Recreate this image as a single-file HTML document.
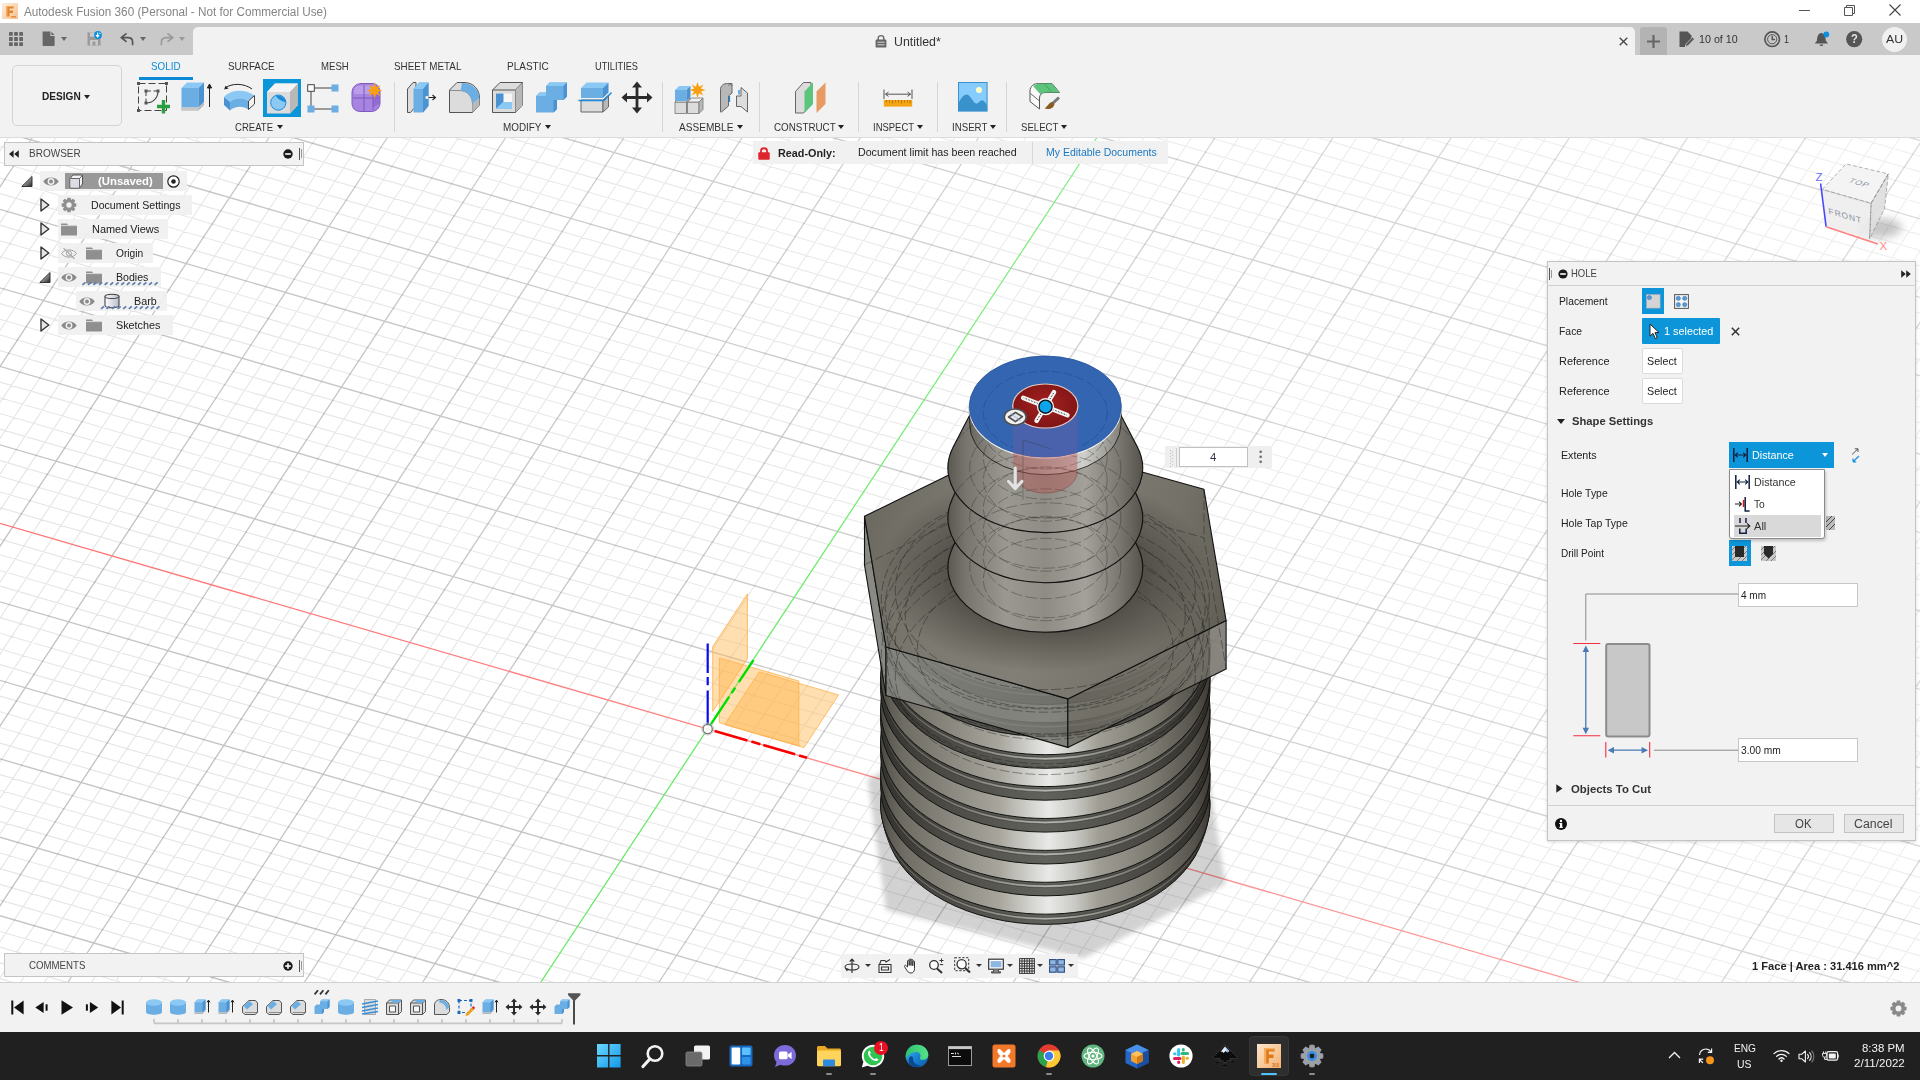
<!DOCTYPE html>
<html lang="en"><head><meta charset="utf-8"><title>Autodesk Fusion 360</title><style>
html,body{margin:0;padding:0}
body{width:1920px;height:1080px;overflow:hidden;background:#fff;position:relative;font-family:"Liberation Sans",sans-serif}
.b{position:absolute;display:block}
.t{position:absolute;display:block;white-space:nowrap;transform-origin:0 50%}
svg{overflow:visible}
</style></head>
<body>
<svg class="b" style="left:0;top:0" width="1920" height="1080" viewBox="0 0 1920 1080">
<path d="M-2.0 153.8L9.7 136.0M-2.0 225.7L57.0 136.0M-2.0 261.7L80.7 136.0M-2.0 297.6L104.4 136.0M-2.0 333.6L128.1 136.0M-2.0 405.5L175.4 136.0M-2.0 441.5L199.1 136.0M-2.0 477.4L222.7 136.0M-2.0 513.4L246.4 136.0M-2.0 585.3L293.7 136.0M-2.0 621.2L317.4 136.0M-2.0 657.2L341.1 136.0M-2.0 693.1L364.7 136.0M-2.0 765.0L412.1 136.0M-2.0 801.0L435.7 136.0M-2.0 836.9L459.4 136.0M-2.0 872.9L483.0 136.0M-2.0 944.7L530.3 136.0M-2.0 980.7L554.0 136.0M18.8 985.0L577.7 136.0M42.5 985.0L601.3 136.0M89.8 985.0L648.6 136.0M113.4 985.0L672.3 136.0M137.1 985.0L695.9 136.0M160.7 985.0L719.6 136.0M208.0 985.0L766.9 136.0M231.6 985.0L790.5 136.0M255.3 985.0L814.2 136.0M278.9 985.0L837.8 136.0M326.2 985.0L885.1 136.0M349.9 985.0L908.8 136.0M373.5 985.0L932.4 136.0M397.1 985.0L956.1 136.0M444.4 985.0L1003.3 136.0M468.1 985.0L1027.0 136.0M491.7 985.0L1050.6 136.0M515.3 985.0L1074.3 136.0M562.6 985.0L1121.5 136.0M586.2 985.0L1145.2 136.0M609.9 985.0L1168.8 136.0M633.5 985.0L1192.4 136.0M680.8 985.0L1239.7 136.0M704.4 985.0L1263.3 136.0M728.0 985.0L1287.0 136.0M751.6 985.0L1310.6 136.0M798.9 985.0L1357.9 136.0M822.5 985.0L1381.5 136.0M846.2 985.0L1405.1 136.0M869.8 985.0L1428.8 136.0M917.0 985.0L1476.0 136.0M940.6 985.0L1499.6 136.0M964.3 985.0L1523.3 136.0M987.9 985.0L1546.9 136.0M1035.1 985.0L1594.1 136.0M1058.7 985.0L1617.7 136.0M1082.4 985.0L1641.4 136.0M1106.0 985.0L1665.0 136.0M1153.2 985.0L1712.2 136.0M1176.8 985.0L1735.8 136.0M1200.4 985.0L1759.4 136.0M1224.0 985.0L1783.1 136.0M1271.3 985.0L1830.3 136.0M1294.9 985.0L1853.9 136.0M1318.5 985.0L1877.5 136.0M1342.1 985.0L1901.1 136.0M1389.3 985.0L1922.0 176.0M1412.9 985.0L1922.0 211.9M1436.5 985.0L1922.0 247.7M1460.1 985.0L1922.0 283.6M1507.3 985.0L1922.0 355.3M1530.9 985.0L1922.0 391.1M1554.5 985.0L1922.0 426.9M1578.1 985.0L1922.0 462.8M1625.3 985.0L1922.0 534.5M1648.9 985.0L1922.0 570.3M1672.5 985.0L1922.0 606.1M1696.1 985.0L1922.0 642.0M1743.3 985.0L1922.0 713.6M1766.9 985.0L1922.0 749.5M1790.5 985.0L1922.0 785.3M1814.1 985.0L1922.0 821.1M1861.3 985.0L1922.0 892.8M1884.8 985.0L1922.0 928.6M1908.4 985.0L1922.0 964.4M-2.0 978.0L22.3 985.0M-2.0 962.3L76.3 985.0M-2.0 946.6L130.4 985.0M-2.0 930.9L184.5 985.0M-2.0 899.5L292.6 985.0M-2.0 883.8L346.6 985.0M-2.0 868.1L400.6 985.0M-2.0 852.4L454.7 985.0M-2.0 821.0L562.7 985.0M-2.0 805.4L616.8 985.0M-2.0 789.7L670.8 985.0M-2.0 774.0L724.8 985.0M-2.0 742.6L832.8 985.0M-2.0 726.9L886.8 985.0M-2.0 711.2L940.8 985.0M-2.0 695.5L994.8 985.0M-2.0 664.1L1102.8 985.0M-2.0 648.4L1156.8 985.0M-2.0 632.7L1210.7 985.0M-2.0 617.0L1264.7 985.0M-2.0 585.6L1372.7 985.0M-2.0 569.9L1426.6 985.0M-2.0 554.2L1480.6 985.0M-2.0 538.5L1534.5 985.0M-2.0 507.1L1642.4 985.0M-2.0 491.4L1696.4 985.0M-2.0 475.7L1750.3 985.0M-2.0 460.0L1804.2 985.0M-2.0 428.6L1912.1 985.0M-2.0 412.9L1922.0 972.2M-2.0 397.2L1922.0 956.5M-2.0 381.5L1922.0 940.9M-2.0 350.1L1922.0 909.5M-2.0 334.4L1922.0 893.8M-2.0 318.7L1922.0 878.2M-2.0 303.0L1922.0 862.5M-2.0 271.6L1922.0 831.1M-2.0 255.9L1922.0 815.5M-2.0 240.2L1922.0 799.8M-2.0 224.5L1922.0 784.1M-2.0 193.1L1922.0 752.8M-2.0 177.4L1922.0 737.1M-2.0 161.7L1922.0 721.4M-2.0 146.0L1922.0 705.7M71.7 136.0L1922.0 674.4M125.7 136.0L1922.0 658.7M179.6 136.0L1922.0 643.0M233.6 136.0L1922.0 627.3M341.5 136.0L1922.0 596.0M395.5 136.0L1922.0 580.3M449.4 136.0L1922.0 564.6M503.4 136.0L1922.0 548.9M611.3 136.0L1922.0 517.6M665.2 136.0L1922.0 501.9M719.1 136.0L1922.0 486.2M773.1 136.0L1922.0 470.5M880.9 136.0L1922.0 439.1M934.8 136.0L1922.0 423.5M988.7 136.0L1922.0 407.8M1042.6 136.0L1922.0 392.1M1150.4 136.0L1922.0 360.7M1204.3 136.0L1922.0 345.0M1258.2 136.0L1922.0 329.3M1312.1 136.0L1922.0 313.7M1419.9 136.0L1922.0 282.3M1473.7 136.0L1922.0 266.6M1527.6 136.0L1922.0 250.9M1581.5 136.0L1922.0 235.2M1689.2 136.0L1922.0 203.8M1743.0 136.0L1922.0 188.2M1796.9 136.0L1922.0 172.5M1850.7 136.0L1922.0 156.8" stroke="#000" stroke-opacity=".105" stroke-width="1.1" fill="none"/>
<path d="M-2.0 189.7L33.4 136.0M-2.0 369.6L151.7 136.0M-2.0 549.3L270.1 136.0M-2.0 729.1L388.4 136.0M-2.0 908.8L506.7 136.0M66.1 985.0L625.0 136.0M184.3 985.0L743.2 136.0M302.6 985.0L861.5 136.0M420.8 985.0L979.7 136.0M657.1 985.0L1216.1 136.0M775.3 985.0L1334.2 136.0M893.4 985.0L1452.4 136.0M1011.5 985.0L1570.5 136.0M1129.6 985.0L1688.6 136.0M1247.6 985.0L1806.7 136.0M1365.7 985.0L1922.0 140.2M1483.7 985.0L1922.0 319.4M1601.7 985.0L1922.0 498.6M1719.7 985.0L1922.0 677.8M1837.7 985.0L1922.0 856.9M-2.0 915.2L238.5 985.0M-2.0 836.7L508.7 985.0M-2.0 758.3L778.8 985.0M-2.0 679.8L1048.8 985.0M-2.0 601.3L1318.7 985.0M-2.0 444.3L1858.1 985.0M-2.0 365.8L1922.0 925.2M-2.0 287.3L1922.0 846.8M-2.0 208.8L1922.0 768.4M17.7 136.0L1922.0 690.0M287.6 136.0L1922.0 611.6M557.3 136.0L1922.0 533.2M827.0 136.0L1922.0 454.8M1096.5 136.0L1922.0 376.4M1366.0 136.0L1922.0 298.0M1635.3 136.0L1922.0 219.5M1904.6 136.0L1922.0 141.1" stroke="#000" stroke-opacity=".235" stroke-width="1.35" fill="none"/>
<path d="M-2.0 522.8L1588.5 985.0" stroke="#ff7474" stroke-width="1.3" fill="none"/>
<path d="M539.0 985.0L1097.9 136.0" stroke="#58e858" stroke-width="1.3" fill="none"/>
<defs><linearGradient id="gFade" gradientUnits="userSpaceOnUse" x1="300" y1="900" x2="1700" y2="200"><stop offset="0" stop-color="#fff" stop-opacity="0"/><stop offset="1" stop-color="#fff" stop-opacity=".38"/></linearGradient></defs><rect x="0" y="138" width="1920" height="845" fill="url(#gFade)"/>
<defs><linearGradient id="gBarb" gradientUnits="userSpaceOnUse" x1="946" y1="0" x2="1145" y2="0"><stop offset="0" stop-color="#57554d"/><stop offset=".1" stop-color="#77756d"/><stop offset=".3" stop-color="#9a9890"/><stop offset=".5" stop-color="#8e8c84"/><stop offset=".7" stop-color="#a3a199"/><stop offset=".86" stop-color="#7c7a72"/><stop offset="1" stop-color="#514f47"/></linearGradient><linearGradient id="gThr" gradientUnits="userSpaceOnUse" x1="880" y1="0" x2="1211" y2="0"><stop offset="0" stop-color="#46443d"/><stop offset=".03" stop-color="#5e5c54"/><stop offset=".07" stop-color="#6e6c63"/><stop offset=".21" stop-color="#8a887e"/><stop offset=".36" stop-color="#a8a69c"/><stop offset=".45" stop-color="#d0d0cc"/><stop offset=".51" stop-color="#e9e9e7"/><stop offset=".59" stop-color="#c8c8c4"/><stop offset=".66" stop-color="#a09e94"/><stop offset=".82" stop-color="#7d7b72"/><stop offset=".95" stop-color="#55534b"/><stop offset="1" stop-color="#3a3831"/></linearGradient><linearGradient id="gGrv" gradientUnits="userSpaceOnUse" x1="880" y1="0" x2="1211" y2="0"><stop offset="0" stop-color="#34322c"/><stop offset=".2" stop-color="#4c4b45"/><stop offset=".5" stop-color="#62625c"/><stop offset=".8" stop-color="#4a4943"/><stop offset="1" stop-color="#2c2a25"/></linearGradient><linearGradient id="gRdg" gradientUnits="userSpaceOnUse" x1="880" y1="0" x2="1211" y2="0"><stop offset="0" stop-color="#55534b"/><stop offset=".3" stop-color="#8a8982"/><stop offset=".52" stop-color="#b5b5b0"/><stop offset=".8" stop-color="#7a7972"/><stop offset="1" stop-color="#45433c"/></linearGradient><linearGradient id="gHexTop" gradientUnits="userSpaceOnUse" x1="864" y1="520" x2="1226" y2="620"><stop offset="0" stop-color="#6b6960"/><stop offset=".25" stop-color="#7b7970"/><stop offset=".5" stop-color="#827f76"/><stop offset=".8" stop-color="#737168"/><stop offset="1" stop-color="#605e55"/></linearGradient><linearGradient id="gHexFL" gradientUnits="userSpaceOnUse" x1="886" y1="0" x2="1068" y2="0"><stop offset="0" stop-color="#8b8b86"/><stop offset="1" stop-color="#72726c"/></linearGradient><linearGradient id="gHexFR" gradientUnits="userSpaceOnUse" x1="1068" y1="0" x2="1227" y2="0"><stop offset="0" stop-color="#67655c"/><stop offset="1" stop-color="#77756c"/></linearGradient><linearGradient id="gNeck" gradientUnits="userSpaceOnUse" x1="969" y1="0" x2="1122" y2="0"><stop offset="0" stop-color="#66645c"/><stop offset=".2" stop-color="#98968e"/><stop offset=".45" stop-color="#a8a6a0"/><stop offset=".75" stop-color="#cfcfcb"/><stop offset="1" stop-color="#807e76"/></linearGradient><filter id="fSh" x="-20%" y="-20%" width="140%" height="140%"><feGaussianBlur stdDeviation="7"/></filter><filter id="fSh2" x="-50%" y="-80%" width="200%" height="260%"><feGaussianBlur stdDeviation="4"/></filter><radialGradient id="gAO" cx=".5" cy=".5" r=".5"><stop offset="0" stop-color="#1c1a14" stop-opacity=".5"/><stop offset=".6" stop-color="#1c1a14" stop-opacity=".4"/><stop offset="1" stop-color="#1c1a14" stop-opacity="0"/></radialGradient><filter id="fSh3" x="-10%" y="-10%" width="120%" height="120%"><feGaussianBlur stdDeviation="2.5"/></filter><radialGradient id="gRed" cx=".5" cy=".45" r=".6"><stop offset="0" stop-color="#a52020"/><stop offset="1" stop-color="#7c1414"/></radialGradient></defs><path d="M724.6 724.6L804.0 747.6L838.6 694.9L759.3 671.9Z" fill="#ffb040" fill-opacity=".42" stroke="#ffb04c" stroke-opacity=".8" stroke-width="1"/><path d="M712.7 711.4L747.4 658.7L747.4 593.9L712.7 646.6Z" fill="#ffb040" fill-opacity=".42" stroke="#ffb04c" stroke-opacity=".8" stroke-width="1"/><path d="M719.4 722.7L798.8 745.8L798.8 681.0L719.4 657.9Z" fill="#ffb040" fill-opacity=".42" stroke="#ffb04c" stroke-opacity=".8" stroke-width="1"/><path d="M707.7 643.5V673M707.7 677V685.3M707.7 690.4V726" stroke="#0a0af0" stroke-width="2.2" fill="none"/><path d="M710.0 725.6L729.2 696.7M731.5 693.2L735.2 687.7M738.8 682.2L753.5 660.2" stroke="#00e000" stroke-width="2.4" fill="none"/><path d="M714.7 731.0L747.4 740.5M751.4 741.6L760.3 744.2M763.3 745.1L795.1 754.3M799.1 755.4L807.0 757.7" stroke="#f80000" stroke-width="2.6" fill="none"/><circle cx="707.7" cy="729.0" r="4.6" fill="#fff" fill-opacity=".85" stroke="#777" stroke-width="1.3"/><circle cx="707.7" cy="729.0" r="6" fill="none" stroke="#bbb" stroke-width="0.8"/><path d="M867.5 779L886 910L1083 958.5L1225.5 884L1205 755L1030 700Z" fill="#000" fill-opacity=".175" filter="url(#fSh3)"/><path d="M884.1 827.0A164.7 109.4 0 1 1 1206.5 827.0L1202.6 839.5A160.7 106.7 0 0 1 888.0 839.5Z" fill="url(#gGrv)" stroke="#111" stroke-width="1"/><path d="M882.1 809.1A163.2 108.4 0 0 0 1208.5 809.1L1208.5 811.5A163.2 108.4 0 0 1 882.1 811.5Z" fill="url(#gRdg)"/><path d="M882.1 809.1A163.2 108.4 0 0 0 1208.5 809.1M882.1 811.5A163.2 108.4 0 0 0 1208.5 811.5" fill="none" stroke="#222" stroke-width=".6" stroke-opacity=".7"/><path d="M893.3 759.0A157.5 104.6 0 0 1 1197.3 759.0L1204.2 776.0A164.7 109.4 0 1 1 886.4 776.0Z" fill="url(#gThr)" stroke="#111" stroke-width="1"/><path d="M880.6 772.8A164.7 109.4 0 0 0 1210.0 772.8L1210.0 786.5A164.7 109.4 0 0 1 880.6 786.5Z" fill="url(#gGrv)"/><path d="M881.8 776.4A163.5 108.6 0 0 0 1208.8 776.4L1208.8 779.0A163.5 108.6 0 0 1 881.8 779.0Z" fill="url(#gRdg)"/><path d="M881.8 776.4A163.5 108.6 0 0 0 1208.8 776.4M881.8 779.0A163.5 108.6 0 0 0 1208.8 779.0" fill="none" stroke="#222" stroke-width=".6" stroke-opacity=".7"/><path d="M880.6 786.5A164.7 109.4 0 0 0 1210.0 786.5M880.6 772.8V786.5M1210.0 772.8V786.5" fill="none" stroke="#111" stroke-width="1"/><path d="M893.3 727.1A157.5 104.6 0 0 1 1197.3 727.1L1204.2 744.1A164.7 109.4 0 1 1 886.4 744.1Z" fill="url(#gThr)" stroke="#111" stroke-width="1"/><path d="M880.6 740.9A164.7 109.4 0 0 0 1210.0 740.9L1210.0 754.6A164.7 109.4 0 0 1 880.6 754.6Z" fill="url(#gGrv)"/><path d="M881.8 744.5A163.5 108.6 0 0 0 1208.8 744.5L1208.8 747.1A163.5 108.6 0 0 1 881.8 747.1Z" fill="url(#gRdg)"/><path d="M881.8 744.5A163.5 108.6 0 0 0 1208.8 744.5M881.8 747.1A163.5 108.6 0 0 0 1208.8 747.1" fill="none" stroke="#222" stroke-width=".6" stroke-opacity=".7"/><path d="M880.6 754.6A164.7 109.4 0 0 0 1210.0 754.6M880.6 740.9V754.6M1210.0 740.9V754.6" fill="none" stroke="#111" stroke-width="1"/><path d="M893.3 695.2A157.5 104.6 0 0 1 1197.3 695.2L1204.2 712.2A164.7 109.4 0 1 1 886.4 712.2Z" fill="url(#gThr)" stroke="#111" stroke-width="1"/><path d="M880.6 709.0A164.7 109.4 0 0 0 1210.0 709.0L1210.0 722.7A164.7 109.4 0 0 1 880.6 722.7Z" fill="url(#gGrv)"/><path d="M881.8 712.6A163.5 108.6 0 0 0 1208.8 712.6L1208.8 715.2A163.5 108.6 0 0 1 881.8 715.2Z" fill="url(#gRdg)"/><path d="M881.8 712.6A163.5 108.6 0 0 0 1208.8 712.6M881.8 715.2A163.5 108.6 0 0 0 1208.8 715.2" fill="none" stroke="#222" stroke-width=".6" stroke-opacity=".7"/><path d="M880.6 722.7A164.7 109.4 0 0 0 1210.0 722.7M880.6 709.0V722.7M1210.0 709.0V722.7" fill="none" stroke="#111" stroke-width="1"/><path d="M893.3 663.3A157.5 104.6 0 0 1 1197.3 663.3L1204.2 680.3A164.7 109.4 0 1 1 886.4 680.3Z" fill="url(#gThr)" stroke="#111" stroke-width="1"/><path d="M880.6 677.1A164.7 109.4 0 0 0 1210.0 677.1L1210.0 690.8A164.7 109.4 0 0 1 880.6 690.8Z" fill="url(#gGrv)"/><path d="M881.8 680.7A163.5 108.6 0 0 0 1208.8 680.7L1208.8 683.3A163.5 108.6 0 0 1 881.8 683.3Z" fill="url(#gRdg)"/><path d="M881.8 680.7A163.5 108.6 0 0 0 1208.8 680.7M881.8 683.3A163.5 108.6 0 0 0 1208.8 683.3" fill="none" stroke="#222" stroke-width=".6" stroke-opacity=".7"/><path d="M880.6 690.8A164.7 109.4 0 0 0 1210.0 690.8M880.6 677.1V690.8M1210.0 677.1V690.8" fill="none" stroke="#111" stroke-width="1"/><path d="M893.3 631.4A157.5 104.6 0 0 1 1197.3 631.4L1204.2 648.4A164.7 109.4 0 1 1 886.4 648.4Z" fill="url(#gThr)" stroke="#111" stroke-width="1"/><path d="M880.6 645.2A164.7 109.4 0 0 0 1210.0 645.2L1210.0 658.9A164.7 109.4 0 0 1 880.6 658.9Z" fill="url(#gGrv)"/><path d="M881.8 648.8A163.5 108.6 0 0 0 1208.8 648.8L1208.8 651.4A163.5 108.6 0 0 1 881.8 651.4Z" fill="url(#gRdg)"/><path d="M881.8 648.8A163.5 108.6 0 0 0 1208.8 648.8M881.8 651.4A163.5 108.6 0 0 0 1208.8 651.4" fill="none" stroke="#222" stroke-width=".6" stroke-opacity=".7"/><path d="M880.6 658.9A164.7 109.4 0 0 0 1210.0 658.9M880.6 645.2V658.9M1210.0 645.2V658.9" fill="none" stroke="#111" stroke-width="1"/><path d="M893.3 599.5A157.5 104.6 0 0 1 1197.3 599.5L1204.2 616.5A164.7 109.4 0 1 1 886.4 616.5Z" fill="url(#gThr)" stroke="#111" stroke-width="1"/><path d="M880.6 613.3A164.7 109.4 0 0 0 1210.0 613.3L1210.0 627.0A164.7 109.4 0 0 1 880.6 627.0Z" fill="url(#gGrv)"/><path d="M881.8 616.9A163.5 108.6 0 0 0 1208.8 616.9L1208.8 619.5A163.5 108.6 0 0 1 881.8 619.5Z" fill="url(#gRdg)"/><path d="M881.8 616.9A163.5 108.6 0 0 0 1208.8 616.9M881.8 619.5A163.5 108.6 0 0 0 1208.8 619.5" fill="none" stroke="#222" stroke-width=".6" stroke-opacity=".7"/><path d="M880.6 627.0A164.7 109.4 0 0 0 1210.0 627.0M880.6 613.3V627.0M1210.0 613.3V627.0" fill="none" stroke="#111" stroke-width="1"/><path d="M893.3 567.6A157.5 104.6 0 0 1 1197.3 567.6L1204.2 584.6A164.7 109.4 0 1 1 886.4 584.6Z" fill="url(#gThr)" stroke="#111" stroke-width="1"/><path d="M880.6 581.4A164.7 109.4 0 0 0 1210.0 581.4L1210.0 595.1A164.7 109.4 0 0 1 880.6 595.1Z" fill="url(#gGrv)"/><path d="M881.8 585.0A163.5 108.6 0 0 0 1208.8 585.0L1208.8 587.6A163.5 108.6 0 0 1 881.8 587.6Z" fill="url(#gRdg)"/><path d="M881.8 585.0A163.5 108.6 0 0 0 1208.8 585.0M881.8 587.6A163.5 108.6 0 0 0 1208.8 587.6" fill="none" stroke="#222" stroke-width=".6" stroke-opacity=".7"/><path d="M880.6 595.1A164.7 109.4 0 0 0 1210.0 595.1M880.6 581.4V595.1M1210.0 581.4V595.1" fill="none" stroke="#111" stroke-width="1"/><path d="M864.5 516.3L886.0 647.0L886.0 695.5L864.5 564.8Z" fill="#8a8a84" stroke="#111" stroke-width="1.1" stroke-linejoin="round"/><path d="M886.0 647.0L1067.8 698.9L1067.8 747.4L886.0 695.5Z" fill="url(#gHexFL)" fill-opacity=".86" stroke="#111" stroke-width="1.1" stroke-linejoin="round"/><path d="M1067.8 698.9L1226.1 620.6L1226.1 669.1L1067.8 747.4Z" fill="url(#gHexFR)" fill-opacity=".88" stroke="#111" stroke-width="1.1" stroke-linejoin="round"/><path d="M864.5 516.3L1022.8 438.7L1203.9 489.2L1226.1 620.6L1067.8 698.9L886.0 647.0Z" fill="url(#gHexTop)" stroke="#111" stroke-width="1.1" stroke-linejoin="round"/><clipPath id="cpHex"><path d="M864.5 516.3L1022.8 438.7L1203.9 489.2L1226.1 620.6L1067.8 698.9L886.0 647.0Z"/></clipPath><g clip-path="url(#cpHex)"><ellipse cx="1045" cy="572" rx="165" ry="100" fill="url(#gAO)"/></g><path d="M864.5 564.8L1022.8 487.2L1203.9 537.7L1226.1 669.1M1022.8 438.7L1022.8 487.2M1203.9 489.2L1203.9 537.7" fill="none" stroke="#222" stroke-opacity=".55" stroke-width=".8" stroke-dasharray="9 3"/><ellipse cx="1045.3" cy="600.0" rx="164.0" ry="108.9" fill="none" stroke="#1a1a1a" stroke-opacity=".5" stroke-width=".8" stroke-dasharray="10 3"/><ellipse cx="1045.3" cy="606.0" rx="160.0" ry="106.2" fill="none" stroke="#1a1a1a" stroke-opacity=".5" stroke-width=".8" stroke-dasharray="10 3"/><ellipse cx="1045.3" cy="625.0" rx="164.0" ry="108.9" fill="none" stroke="#1a1a1a" stroke-opacity=".5" stroke-width=".8" stroke-dasharray="10 3"/><ellipse cx="1045.3" cy="632.0" rx="158.0" ry="104.9" fill="none" stroke="#1a1a1a" stroke-opacity=".5" stroke-width=".8" stroke-dasharray="10 3"/><ellipse cx="1045.3" cy="655.0" rx="164.0" ry="108.9" fill="none" stroke="#1a1a1a" stroke-opacity=".5" stroke-width=".8" stroke-dasharray="10 3"/><ellipse cx="1045.3" cy="662.0" rx="158.0" ry="104.9" fill="none" stroke="#1a1a1a" stroke-opacity=".5" stroke-width=".8" stroke-dasharray="10 3"/><ellipse cx="1045.3" cy="590.0" rx="150.0" ry="99.6" fill="none" stroke="#1a1a1a" stroke-opacity=".5" stroke-width=".8" stroke-dasharray="10 3"/><ellipse cx="1045.3" cy="640.0" rx="150.0" ry="99.6" fill="none" stroke="#1a1a1a" stroke-opacity=".5" stroke-width=".8" stroke-dasharray="10 3"/><ellipse cx="1045.3" cy="615.0" rx="140.0" ry="93.0" fill="none" stroke="#1a1a1a" stroke-opacity=".5" stroke-width=".8" stroke-dasharray="10 3"/><ellipse cx="1045.3" cy="650.0" rx="128.0" ry="85.0" fill="none" stroke="#1a1a1a" stroke-opacity=".5" stroke-width=".8" stroke-dasharray="10 3"/><ellipse cx="1045.3" cy="675.0" rx="150.0" ry="99.6" fill="none" stroke="#1a1a1a" stroke-opacity=".5" stroke-width=".8" stroke-dasharray="10 3"/><path d="M973.0 503.3A75.6 50.2 0 0 1 1117.6 503.3L1138.4 548.6A97.4 64.7 0 1 1 952.2 548.6Z" fill="url(#gBarb)" stroke="#111" stroke-width="1.1"/><path d="M972.9 453.5A75.6 50.2 0 0 1 1117.7 453.5L1138.5 499.3A97.4 64.7 0 1 1 952.1 499.3Z" fill="url(#gBarb)" stroke="#111" stroke-width="1.1"/><path d="M973.8 407.3A75.6 50.2 0 0 1 1116.8 407.3L1137.4 446.9A97.4 64.7 0 1 1 953.2 446.9Z" fill="url(#gBarb)" stroke="#111" stroke-width="1.1"/><path d="M969.3 407.3A76.0 50.5 0 1 1 1121.3 407.3L1120.9 424.5A75.6 50.2 0 0 1 969.7 424.5Z" fill="url(#gNeck)" stroke="#111" stroke-width=".8"/><ellipse cx="1045.3" cy="468.0" rx="97.4" ry="64.7" fill="none" stroke="#1a1a1a" stroke-opacity=".42" stroke-width=".75" stroke-dasharray="12 3"/><ellipse cx="1045.3" cy="468.0" rx="75.6" ry="50.2" fill="none" stroke="#1a1a1a" stroke-opacity=".42" stroke-width=".75" stroke-dasharray="12 3"/><ellipse cx="1045.3" cy="458.0" rx="62.0" ry="41.2" fill="none" stroke="#1a1a1a" stroke-opacity=".42" stroke-width=".75" stroke-dasharray="12 3"/><ellipse cx="1045.3" cy="480.0" rx="62.0" ry="41.2" fill="none" stroke="#1a1a1a" stroke-opacity=".42" stroke-width=".75" stroke-dasharray="12 3"/><ellipse cx="1045.3" cy="518.0" rx="97.4" ry="64.7" fill="none" stroke="#1a1a1a" stroke-opacity=".42" stroke-width=".75" stroke-dasharray="12 3"/><ellipse cx="1045.3" cy="518.0" rx="75.6" ry="50.2" fill="none" stroke="#1a1a1a" stroke-opacity=".42" stroke-width=".75" stroke-dasharray="12 3"/><ellipse cx="1045.3" cy="508.0" rx="62.0" ry="41.2" fill="none" stroke="#1a1a1a" stroke-opacity=".42" stroke-width=".75" stroke-dasharray="12 3"/><ellipse cx="1045.3" cy="530.0" rx="62.0" ry="41.2" fill="none" stroke="#1a1a1a" stroke-opacity=".42" stroke-width=".75" stroke-dasharray="12 3"/><ellipse cx="1045.3" cy="567.5" rx="97.4" ry="64.7" fill="none" stroke="#1a1a1a" stroke-opacity=".42" stroke-width=".75" stroke-dasharray="12 3"/><ellipse cx="1045.3" cy="567.5" rx="75.6" ry="50.2" fill="none" stroke="#1a1a1a" stroke-opacity=".42" stroke-width=".75" stroke-dasharray="12 3"/><ellipse cx="1045.3" cy="557.5" rx="62.0" ry="41.2" fill="none" stroke="#1a1a1a" stroke-opacity=".42" stroke-width=".75" stroke-dasharray="12 3"/><ellipse cx="1045.3" cy="579.5" rx="62.0" ry="41.2" fill="none" stroke="#1a1a1a" stroke-opacity=".42" stroke-width=".75" stroke-dasharray="12 3"/><ellipse cx="1045.3" cy="427.7" rx="62.0" ry="41.2" fill="none" stroke="#1a1a1a" stroke-opacity=".42" stroke-width=".75" stroke-dasharray="12 3"/><ellipse cx="1045.3" cy="407.8" rx="76.6" ry="50.9" fill="#e8e8e8"/><ellipse cx="1045.3" cy="406.5" rx="76.0" ry="50.5" fill="#3465b1" stroke="#2a55a0" stroke-width=".8"/><ellipse cx="1045.3" cy="412.5" rx="62.0" ry="41.2" fill="none" stroke="#1d3f80" stroke-opacity=".55" stroke-width=".8" stroke-dasharray="9 3"/><clipPath id="cpTop"><ellipse cx="1045.3" cy="406.5" rx="76.0" ry="50.5" /></clipPath><path d="M1013.3 406.0V471.5A32.0 21.6 0 0 0 1077.3 471.5V406.0A32.0 21.6 0 0 1 1013.3 406.0Z" fill="#b85050" fill-opacity=".42"/><g clip-path="url(#cpTop)"><path d="M1013.3 406.0V471.5A32.0 21.6 0 0 0 1077.3 471.5V406.0A32.0 21.6 0 0 1 1013.3 406.0Z" fill="#4a62ac"/></g><path d="M1013.3 471.5A32.0 21.6 0 0 0 1077.3 471.5" fill="none" stroke="#7a3030" stroke-opacity=".5" stroke-width=".8"/><path d="M1023 440L1051 449M1023 440V500" fill="none" stroke="#333" stroke-opacity=".45" stroke-width=".8"/><ellipse cx="1045.3" cy="406.0" rx="33.2" ry="22.6" fill="#e8c8c0"/><ellipse cx="1045.3" cy="406.0" rx="32.0" ry="21.6" fill="url(#gRed)"/><path d="M1040.5 404.6L1023.2 397.8" stroke="#f4f4f4" stroke-width="4.6" stroke-linecap="round"/><path d="M1038.1 403.6L1023.7 397.9" stroke="#333" stroke-width="1" stroke-dasharray="1.5 1.5"/><path d="M1050.1 408.4L1067.4 415.2" stroke="#f4f4f4" stroke-width="4.6" stroke-linecap="round"/><path d="M1052.5 409.4L1066.9 415.1" stroke="#333" stroke-width="1" stroke-dasharray="1.5 1.5"/><path d="M1047.2 403.4L1054.0 392.2" stroke="#f4f4f4" stroke-width="4.6" stroke-linecap="round"/><path d="M1048.1 401.9L1053.8 392.6" stroke="#333" stroke-width="1" stroke-dasharray="1.5 1.5"/><path d="M1043.4 409.6L1036.6 420.8" stroke="#f4f4f4" stroke-width="4.6" stroke-linecap="round"/><path d="M1042.5 411.1L1036.8 420.4" stroke="#333" stroke-width="1" stroke-dasharray="1.5 1.5"/><circle cx="1045.5" cy="406.7" r="8.6" fill="#f4f4f4"/><circle cx="1045.5" cy="406.7" r="6.6" fill="#0aa4ec" stroke="#111" stroke-width="1.4"/><ellipse cx="1015.2" cy="417" rx="11" ry="8" fill="#f2f2f2" stroke="#505050" stroke-width="1.7"/><path d="M1008.6 417L1015.6 412.4L1022.4 416.6L1015.4 421.6Z" fill="#e4e4e4" stroke="#505050" stroke-width="1.7" stroke-linejoin="round"/><path d="M1010.5 413.5L1021 421" stroke="#8ab0e8" stroke-width=".8"/><path d="M1015.2 468V487M1008.6 481.5L1015.2 488.6L1021.8 481.5" fill="none" stroke="#888" stroke-opacity=".55" stroke-width="5" stroke-linecap="round" stroke-linejoin="round"/><path d="M1015.2 468V487M1008.6 481.5L1015.2 488.6L1021.8 481.5" fill="none" stroke="#e2e2e2" stroke-width="3.2" stroke-linecap="round" stroke-linejoin="round"/><ellipse cx="1880" cy="228" rx="22" ry="10" fill="#000" fill-opacity=".22" filter="url(#fSh2)"/><path d="M1822.2 189.4L1846.1 163.9L1888.3 173.9L1871.1 203.3Z" fill="#f3f3f3" fill-opacity=".88"/><path d="M1822.2 189.4L1871.1 203.3L1869.6 238.9L1826.1 226.7Z" fill="#ededed" fill-opacity=".9"/><path d="M1871.1 203.3L1888.3 173.9L1884.6 208.5L1869.6 238.9Z" fill="#dedede" fill-opacity=".9"/><path d="M1822.2 189.4L1846.1 163.9L1888.3 173.9L1871.1 203.3ZM1871.1 203.3L1888.3 173.9L1884.6 208.5L1869.6 238.9ZM1871.1 203.3L1869.6 238.9" fill="none" stroke="#777" stroke-opacity=".7" stroke-width=".8" stroke-dasharray="4 2"/><path d="M1822.2 189.4L1871.1 203.3L1888.3 173.9" fill="none" stroke="#999" stroke-opacity=".6" stroke-width=".7"/><text transform="matrix(.962 .273 -.62 .66 1857.6 184.8)" font-size="8.6" letter-spacing=".8" fill="#8a929c" text-anchor="middle" font-family="Liberation Sans,sans-serif">TOP</text><text transform="matrix(.962 .273 .09 .95 1845.6 218.6)" font-size="8.8" letter-spacing=".9" fill="#8a929c" text-anchor="middle" font-family="Liberation Sans,sans-serif">FRONT</text><path d="M1820.6 183.5L1826.1 226.7" stroke="#4848ff" stroke-width="1.6" fill="none"/><path d="M1826.1 226.7L1877.8 243.9" stroke="#ff8080" stroke-width="1.6" fill="none"/><text x="1818.9" y="180.6" font-size="11.5" fill="#6a6aff" text-anchor="middle" font-family="Liberation Sans,sans-serif">Z</text><text x="1883.3" y="249.8" font-size="11.5" fill="#ff8a8a" text-anchor="middle" font-family="Liberation Sans,sans-serif">X</text>
</svg>
<div class="b" style="left:0.00px;top:0.00px;width:1920.00px;height:23.00px;background:#fff;"></div>
<span class="t" style="left:23.50px;top:3.59px;font-size:12.5px;line-height:16.5px;color:#848484;transform:scaleX(0.9380);">Autodesk Fusion 360 (Personal - Not for Commercial Use)</span>
<div class="b" style="left:1799.00px;top:10.00px;width:10.50px;height:1.00px;background:#555;"></div>
<svg class="b" style="left:1843px;top:4px" width="13" height="13" viewBox="0 0 13 13"><path d="M1.5 3.5h8v8h-8zM3.5 3.5v-2h8v8h-2" fill="none" stroke="#555" stroke-width="1"/></svg>
<svg class="b" style="left:1889px;top:4px" width="13" height="13" viewBox="0 0 13 13"><path d="M0.5 0.5L11.5 11.5M11.5 0.5L0.5 11.5" fill="none" stroke="#444" stroke-width="1.1"/></svg>
<div class="b" style="left:0.00px;top:23.00px;width:1920.00px;height:32.00px;background:#c9c9c9;"></div>
<div class="b" style="left:193.00px;top:27.00px;width:1442.00px;height:28.00px;background:#f2f2f2;border-radius:5px 5px 0 0;"></div>
<div class="b" style="left:1639.50px;top:27.00px;width:27.00px;height:28.00px;background:#b3b3b3;border-radius:3px 3px 0 0;"></div>
<span class="t" style="left:894.00px;top:33.89px;font-size:12.5px;line-height:16.5px;color:#333;transform:scaleX(0.9884);">Untitled*</span>
<div class="b" style="left:0.00px;top:55.00px;width:1920.00px;height:82.00px;background:#f2f2f2;"></div>
<div class="b" style="left:0.00px;top:137.00px;width:1920.00px;height:1.00px;background:#dcdcdc;"></div>
<div class="b" style="left:12.00px;top:65.00px;width:109.50px;height:61.00px;background:#f2f2f2;border:1px solid #d4d4d4;border-radius:5px;box-sizing:border-box;"></div>
<span class="t" style="left:42.30px;top:89.18px;font-size:11.5px;line-height:15.5px;color:#222;font-weight:bold;transform:scaleX(0.8778);">DESIGN</span>
<div class="b" style="left:84.20px;top:94.60px;width:0;height:0;border-left:3.50px solid transparent;border-right:3.50px solid transparent;border-top:4.00px solid #222"></div>
<span class="t" style="left:150.50px;top:58.83px;font-size:11px;line-height:15px;color:#0a8ad6;transform:scaleX(0.8936);">SOLID</span>
<span class="t" style="left:228.00px;top:58.83px;font-size:11px;line-height:15px;color:#333;transform:scaleX(0.8989);">SURFACE</span>
<span class="t" style="left:321.00px;top:58.83px;font-size:11px;line-height:15px;color:#333;transform:scaleX(0.8715);">MESH</span>
<span class="t" style="left:394.30px;top:58.83px;font-size:11px;line-height:15px;color:#333;transform:scaleX(0.8940);">SHEET METAL</span>
<span class="t" style="left:507.00px;top:58.83px;font-size:11px;line-height:15px;color:#333;transform:scaleX(0.9095);">PLASTIC</span>
<span class="t" style="left:595.30px;top:58.83px;font-size:11px;line-height:15px;color:#333;transform:scaleX(0.8375);">UTILITIES</span>
<div class="b" style="left:139.00px;top:77.00px;width:53.50px;height:2.50px;background:#0a8ad6;"></div>
<span class="t" style="left:235.30px;top:119.63px;font-size:11px;line-height:15px;color:#333;transform:scaleX(0.8675);">CREATE</span>
<div class="b" style="left:276.50px;top:124.50px;width:0;height:0;border-left:3.50px solid transparent;border-right:3.50px solid transparent;border-top:4.00px solid #222"></div>
<span class="t" style="left:503.30px;top:119.63px;font-size:11px;line-height:15px;color:#333;transform:scaleX(0.8977);">MODIFY</span>
<div class="b" style="left:544.80px;top:124.50px;width:0;height:0;border-left:3.50px solid transparent;border-right:3.50px solid transparent;border-top:4.00px solid #222"></div>
<span class="t" style="left:679.30px;top:119.63px;font-size:11px;line-height:15px;color:#333;transform:scaleX(0.9172);">ASSEMBLE</span>
<div class="b" style="left:736.50px;top:124.50px;width:0;height:0;border-left:3.50px solid transparent;border-right:3.50px solid transparent;border-top:4.00px solid #222"></div>
<span class="t" style="left:774.30px;top:119.63px;font-size:11px;line-height:15px;color:#333;transform:scaleX(0.8936);">CONSTRUCT</span>
<div class="b" style="left:838.20px;top:124.50px;width:0;height:0;border-left:3.50px solid transparent;border-right:3.50px solid transparent;border-top:4.00px solid #222"></div>
<span class="t" style="left:873.00px;top:119.63px;font-size:11px;line-height:15px;color:#333;transform:scaleX(0.8600);">INSPECT</span>
<div class="b" style="left:916.50px;top:124.50px;width:0;height:0;border-left:3.50px solid transparent;border-right:3.50px solid transparent;border-top:4.00px solid #222"></div>
<span class="t" style="left:952.00px;top:119.63px;font-size:11px;line-height:15px;color:#333;transform:scaleX(0.8795);">INSERT</span>
<div class="b" style="left:989.80px;top:124.50px;width:0;height:0;border-left:3.50px solid transparent;border-right:3.50px solid transparent;border-top:4.00px solid #222"></div>
<span class="t" style="left:1021.30px;top:119.63px;font-size:11px;line-height:15px;color:#333;transform:scaleX(0.8740);">SELECT</span>
<div class="b" style="left:1061.20px;top:124.50px;width:0;height:0;border-left:3.50px solid transparent;border-right:3.50px solid transparent;border-top:4.00px solid #222"></div>
<div class="b" style="left:393.50px;top:82.00px;width:1.00px;height:50.00px;background:#d6d6d6;"></div>
<div class="b" style="left:662.20px;top:82.00px;width:1.00px;height:50.00px;background:#d6d6d6;"></div>
<div class="b" style="left:758.80px;top:82.00px;width:1.00px;height:50.00px;background:#d6d6d6;"></div>
<div class="b" style="left:858.20px;top:82.00px;width:1.00px;height:50.00px;background:#d6d6d6;"></div>
<div class="b" style="left:937.20px;top:82.00px;width:1.00px;height:50.00px;background:#d6d6d6;"></div>
<div class="b" style="left:1006.20px;top:82.00px;width:1.00px;height:50.00px;background:#d6d6d6;"></div>
<svg class="b" style="left:2.40px;top:3.00px" width="15.6" height="15.6" viewBox="0 0 15.6 15.6"><defs><linearGradient id="fi" x1="0" y1="0" x2="1" y2="1"><stop offset="0" stop-color="#feeedd"/><stop offset="1" stop-color="#f6c090"/></linearGradient></defs><rect width="16" height="16" fill="url(#fi)"/><path d="M4.5 3H11.5V5.5H7.5V7.5H11V10H7.5V13.5H4.5Z" fill="#e2842c"/><path d="M4.5 3H11.5V4H5.6V13.5H4.5Z" fill="#f4a860"/><rect x="9" y="13" width="5" height="1.6" fill="#e89040"/></svg>
<svg class="b" style="left:9.00px;top:32.00px" width="14" height="14" viewBox="0 0 14 14"><rect x="0" y="0" width="3.8" height="3.8" rx=".6" fill="#666"/><rect x="0" y="5.1" width="3.8" height="3.8" rx=".6" fill="#666"/><rect x="0" y="10.2" width="3.8" height="3.8" rx=".6" fill="#666"/><rect x="5.1" y="0" width="3.8" height="3.8" rx=".6" fill="#666"/><rect x="5.1" y="5.1" width="3.8" height="3.8" rx=".6" fill="#666"/><rect x="5.1" y="10.2" width="3.8" height="3.8" rx=".6" fill="#666"/><rect x="10.2" y="0" width="3.8" height="3.8" rx=".6" fill="#666"/><rect x="10.2" y="5.1" width="3.8" height="3.8" rx=".6" fill="#666"/><rect x="10.2" y="10.2" width="3.8" height="3.8" rx=".6" fill="#666"/></svg>
<svg class="b" style="left:42.00px;top:31.30px" width="13" height="15.4" viewBox="0 0 13 15.4"><path d="M0.6 0.6H8.4V5H12.6V14.2C12.6 14.6 12.3 14.9 11.9 14.9H1.3C0.9 14.9 0.6 14.6 0.6 14.2Z" fill="#666"/><path d="M9.4 0.8L12.6 4H9.4Z" fill="#666"/></svg>
<div class="b" style="left:60.90px;top:37.20px;width:0;height:0;border-left:3.50px solid transparent;border-right:3.50px solid transparent;border-top:4.20px solid #666"></div>
<svg class="b" style="left:87.00px;top:32.30px" width="14" height="14" viewBox="0 0 14 14"><path d="M0.5 0.5H10.5L13.5 3.5V13.5H0.5Z" fill="#9a9a9a"/><rect x="3" y="0.5" width="6" height="4.2" fill="#c9c9c9"/><rect x="3" y="8" width="8" height="5.5" fill="#c9c9c9"/><rect x="5.6" y="9.6" width="2.8" height="3.9" fill="#9a9a9a"/></svg>
<svg class="b" style="left:94.30px;top:30.60px" width="8" height="8" viewBox="0 0 8 8"><circle cx="4" cy="4" r="3.9" fill="#0d8fe0"/><path d="M3.6 1.6V5.4M2 4.2L3.6 5.9L5.2 4.2M5.4 2.4H6.4" fill="none" stroke="#fff" stroke-width="1.1"/></svg>
<svg class="b" style="left:119.80px;top:33.00px" width="14" height="12" viewBox="0 0 14 12"><path d="M6 0.8L1.2 4.6L6 8.4M1.6 4.6H8C11 4.6 12.6 6.6 12.6 9.2V11.4" fill="none" stroke="#555" stroke-width="1.7" stroke-linejoin="round" stroke-linecap="round"/></svg>
<div class="b" style="left:140.10px;top:37.20px;width:0;height:0;border-left:3.50px solid transparent;border-right:3.50px solid transparent;border-top:4.20px solid #666"></div>
<svg class="b" style="left:159.60px;top:33.00px" width="14" height="12" viewBox="0 0 14 12"><path d="M8 0.8L12.8 4.6L8 8.4M12.4 4.6H6C3 4.6 1.4 6.6 1.4 9.2V11.4" fill="none" stroke="#9a9a9a" stroke-width="1.7" stroke-linejoin="round" stroke-linecap="round"/></svg>
<div class="b" style="left:178.80px;top:37.20px;width:0;height:0;border-left:3.50px solid transparent;border-right:3.50px solid transparent;border-top:4.20px solid #9a9a9a"></div>
<svg class="b" style="left:875.00px;top:34.30px" width="12" height="14" viewBox="0 0 12 14"><path d="M3.2 6V4C3.2 0.8 8.8 0.8 8.8 4V6" fill="none" stroke="#666" stroke-width="1.4"/><rect x="0.6" y="5.6" width="10.8" height="8" rx="1.2" fill="#666"/><path d="M2.4 8.2H9.6M2.4 10.8H9.6" stroke="#f2f2f2" stroke-width="0.8"/></svg>
<svg class="b" style="left:1619.20px;top:36.60px" width="9" height="9" viewBox="0 0 9 9"><path d="M0.7 0.7L8.3 8.3M8.3 0.7L0.7 8.3" stroke="#444" stroke-width="1.3"/></svg>
<svg class="b" style="left:1646.50px;top:34.50px" width="13" height="13" viewBox="0 0 13 13"><path d="M6.5 0V13M0 6.5H13" stroke="#666" stroke-width="2.2"/></svg>
<svg class="b" style="left:1679.00px;top:30.50px" width="16" height="17" viewBox="0 0 16 17"><path d="M0.5 0.5H8.5L12.5 4.5V8L6 14.5V16H0.5Z" fill="#555"/><path d="M13.5 6.2L15.4 8.1L8.8 14.8L6.4 15.4L7 13Z" fill="#555" stroke="#c9c9c9" stroke-width="0.7"/></svg>
<span class="t" style="left:1699.00px;top:31.58px;font-size:11.5px;line-height:15.5px;color:#333;transform:scaleX(0.9310);">10 of 10</span>
<svg class="b" style="left:1763.50px;top:31.00px" width="16.4" height="16.4" viewBox="0 0 16.4 16.4"><circle cx="8.2" cy="8.2" r="7.3" fill="none" stroke="#555" stroke-width="1.7"/><circle cx="8.2" cy="8.2" r="4.6" fill="none" stroke="#555" stroke-width="1"/><path d="M8.2 4.8V8.4H11" fill="none" stroke="#555" stroke-width="1.5"/></svg>
<span class="t" style="left:1784.00px;top:31.58px;font-size:11.5px;line-height:15.5px;color:#333;transform:scaleX(0.7817);">1</span>
<svg class="b" style="left:1813.50px;top:30.00px" width="16" height="18" viewBox="0 0 16 18"><path d="M7.4 3C3.6 3.6 3.2 7 3 10.5L0.8 13.4H14L11.8 10.5C11.6 7 11.2 3.6 7.4 3Z" fill="#555"/><path d="M5.6 14.6H9.2C9.2 16.6 5.6 16.6 5.6 14.6Z" fill="#555"/><circle cx="12.3" cy="4.4" r="2.9" fill="#0d8fe0"/></svg>
<svg class="b" style="left:1845.80px;top:31.00px" width="16.4" height="16.4" viewBox="0 0 16.4 16.4"><circle cx="8.2" cy="8.2" r="8.1" fill="#555"/></svg>
<span class="t" style="left:1850.60px;top:31.29px;font-size:12.5px;line-height:16.5px;color:#e4e4e4;font-weight:bold;transform:scaleX(0.8907);">?</span>
<div class="b" style="left:1881.80px;top:26.60px;width:25.00px;height:25.00px;background:#f0f0f0;border-radius:50%;"></div>
<span class="t" style="left:1886.00px;top:31.58px;font-size:11.5px;line-height:15.5px;color:#333;transform:scaleX(1.0642);">AU</span>
<svg class="b" style="left:137.00px;top:82.00px" width="36" height="34" viewBox="0 0 36 34"><rect x="1.5" y="1.5" width="28" height="27" fill="none" stroke="#444" stroke-width="1" stroke-dasharray="7 3"/><rect x="0" y="0" width="3" height="3" fill="#555"/><rect x="28" y="0" width="3" height="3" fill="#555"/><rect x="0" y="27" width="3" height="3" fill="#555"/><path d="M9 9H21M9 9V21" fill="none" stroke="#444" stroke-width="1" stroke-dasharray="5 2.5"/><path d="M21 9C21 16 16 21 9 21" fill="none" stroke="#444" stroke-width="1.1"/><rect x="7.5" y="7.5" width="3" height="3" fill="#555"/><rect x="19.5" y="7.5" width="3" height="3" fill="#555"/><rect x="7.5" y="19.5" width="3" height="3" fill="#555"/><path d="M20 24.5H33M26.5 18V31.5" stroke="#28a040" stroke-width="3.4"/></svg>
<svg class="b" style="left:181.00px;top:81.00px" width="32" height="34" viewBox="0 0 32 34"><path d="M0.5 7H17.5V26.5H0.5Z" fill="#6aaee4"/><path d="M0.5 7L6 1.5H23L17.5 7Z" fill="#8cc8f4"/><path d="M17.5 7L23 1.5V21L17.5 26.5Z" fill="#4a92d0"/><path d="M0.5 26.5H17.5L23 21V24L17.5 29.5H0.5Z" fill="#b8b8b8"/><path d="M0.5 26.5H17.5V29.5H0.5Z" fill="#c8c8c8"/><path d="M28.5 26V4M26.4 7L28.5 3L30.6 7Z" fill="#222" stroke="#222" stroke-width="1"/></svg>
<svg class="b" style="left:222.00px;top:82.00px" width="36" height="32" viewBox="0 0 36 32"><path d="M3 6C10 1 22 1 30 7" fill="none" stroke="#222" stroke-width="1"/><path d="M2.2 7.6L3.4 3.8L6.6 6.6Z" fill="#222"/><path d="M2 15C9 7 24 7 32.5 13.5L26.5 19C21 15 13 15.5 8 20Z" fill="#8cc8f4"/><path d="M2 15L8 20V28.5L2 23Z" fill="#4a92d0"/><path d="M8 20C13 15.5 21 15 26.5 19V27.5C21 23.5 13 24 8 28.5Z" fill="#6aaee4"/><path d="M26.5 19L32.5 13.5V22L26.5 27.5Z" fill="#f4f4f4" stroke="#444" stroke-width="1"/></svg>
<div class="b" style="left:263.20px;top:79.00px;width:37.60px;height:37.80px;background:#0c96d9;"></div>
<svg class="b" style="left:265.50px;top:81.50px" width="33" height="33" viewBox="0 0 33 33"><path d="M1 10L9 1.5H32V23L24 31.5H1Z" fill="#dcdcdc"/><path d="M1 10L9 1.5H32L24 10Z" fill="#f4f4f4"/><path d="M24 10L32 1.5V23L24 31.5Z" fill="#b8b8b8"/><circle cx="12.3" cy="20.6" r="7.6" fill="#8cc8f4" stroke="#1a8ad8" stroke-width="1"/><path d="M9.5 13.6C12 17 15 19.6 19.6 20.2C19.4 16 15 12.6 9.5 13.6Z" fill="#1a8ad8"/></svg>
<svg class="b" style="left:307.00px;top:84.00px" width="34" height="30" viewBox="0 0 34 30"><path d="M4 4H29M4 4V25M4 25H29" fill="none" stroke="#444" stroke-width="1"/><rect x="0.7" y="0.7" width="6.6" height="6.6" fill="#fff" stroke="#444" stroke-width="1"/><rect x="24.5" y="0.5" width="7" height="7" fill="#6aaee4"/><rect x="0.5" y="21.5" width="7" height="7" fill="#6aaee4"/><rect x="24.5" y="21.5" width="7" height="7" fill="#6aaee4"/></svg>
<svg class="b" style="left:350.00px;top:81.00px" width="36" height="34" viewBox="0 0 36 34"><path d="M2 12C2 6 6 2.5 12 2.5H22C27 2.5 30 6 30 12V22C30 27 26 30.5 21 30.5H11C5 30.5 2 27 2 22Z" fill="#a684e0" stroke="#8058c0" stroke-width="1"/><path d="M4 10C4 6 7 4.5 11 4.5H23C26 4.5 28 6.5 28 10V13H4Z" fill="#c0a4f0" fill-opacity=".8"/><path d="M14 4V30M3 17H29M23 6V29" stroke="#7c54b8" stroke-width="0.9" fill="none"/><path d="M23 12L30 9V22L23 27Z" fill="#8a62cc" fill-opacity=".7"/><g transform="translate(24.5 9.5)"><path d="M0 -8L1.6 -3.2L6 -5.6L3.4 -1.4L8 0L3.4 1.4L6 5.6L1.6 3.2L0 8L-1.6 3.2L-6 5.6L-3.4 1.4L-8 0L-3.4 -1.4L-6 -5.6L-1.6 -3.2Z" fill="#f8a010"/></g></svg>
<svg class="b" style="left:406.00px;top:81.00px" width="32" height="34" viewBox="0 0 32 34"><path d="M1.5 8L7 1.5H10V25L4.5 31.5H1.5Z" fill="#dcdcdc" stroke="#555" stroke-width="1"/><path d="M7.5 8L13 1.5H22.5V25L17 31.5H7.5Z" fill="#6aaee4"/><path d="M17 8L22.5 1.5V25L17 31.5Z" fill="#4a92d0"/><path d="M7.5 8L13 1.5H22.5L17 8Z" fill="#8cc8f4"/><path d="M20 16.5H29M26.5 14L29.5 16.5L26.5 19" fill="none" stroke="#222" stroke-width="1.1"/><path d="M19.5 15.2H22.5V17.8H19.5Z" fill="#f4f4f4"/></svg>
<svg class="b" style="left:448.00px;top:81.00px" width="33" height="34" viewBox="0 0 33 34"><path d="M1.5 9L9 1.5H16C26 1.5 31.5 9 31.5 17V24L24.5 31.5H1.5Z" fill="#dcdcdc" stroke="#555" stroke-width="1"/><path d="M24.5 31.5V23C24.5 15 19 9.5 11 9.5H1.5" fill="none" stroke="#777" stroke-width="0.8"/><path d="M24.5 31.5L31.5 24V17L24.5 23Z" fill="#b8b8b8"/><path d="M14 2C24 2 31 8.5 31.4 17L24.6 22.6C24 15 19.5 10.5 12.6 9.6Z" fill="#6aaee4"/></svg>
<svg class="b" style="left:491.00px;top:81.00px" width="33" height="34" viewBox="0 0 33 34"><path d="M1.5 9L9 1.5H31.5V24L24.5 31.5H1.5Z" fill="#dcdcdc" stroke="#555" stroke-width="1"/><path d="M1.5 9H24.5V31.5M24.5 9L31.5 1.5" fill="none" stroke="#555" stroke-width="1"/><path d="M24.5 9L31.5 1.5V24L24.5 31.5Z" fill="#b8b8b8"/><rect x="5" y="12.5" width="16" height="15.5" fill="#f6f6f6"/><path d="M5 12.5H12.5V21L5 28Z" fill="#4a92d0"/><path d="M5 28L12.5 21H21V28Z" fill="#8cc8f4"/></svg>
<svg class="b" style="left:535.00px;top:81.00px" width="33" height="34" viewBox="0 0 33 34"><path d="M1 15L4.5 11.5H11V5L14.5 1.5H32V15.5L28.5 19H22V28L18.5 31.5H1Z" fill="#6aaee4"/><path d="M11 5L14.5 1.5H32L28.5 5Z" fill="#8cc8f4"/><path d="M1 15L4.5 11.5H11V15Z" fill="#8cc8f4"/><path d="M28.5 5L32 1.5V15.5L28.5 19ZM18.5 31.5L22 28V19H18.5Z" fill="#4a92d0"/></svg>
<svg class="b" style="left:578.00px;top:81.00px" width="35" height="34" viewBox="0 0 35 34"><path d="M3 19H25V31H3Z" fill="#dcdcdc" stroke="#666" stroke-width="1"/><path d="M25 19L30.5 14V26L25 31Z" fill="#b8b8b8" stroke="#666" stroke-width="1"/><path d="M3 7H25V17H3Z" fill="#6aaee4"/><path d="M3 7L8.5 1.5H30.5L25 7Z" fill="#8cc8f4"/><path d="M25 7L30.5 1.5V11.5L25 17Z" fill="#4a92d0"/><path d="M0.5 19.5H26L33.5 11.5" fill="none" stroke="#1a8ae0" stroke-width="1.4"/></svg>
<svg class="b" style="left:621.00px;top:81.00px" width="32" height="33" viewBox="0 0 32 33"><path d="M16 0.5L21 6.5H17.4V15.1H26V11.5L31.5 16.5L26 21.5V17.9H17.4V26.5H21L16 32.5L11 26.5H14.6V17.9H6V21.5L0.5 16.5L6 11.5V15.1H14.6V6.5H11Z" fill="#2c2c2c"/></svg>
<svg class="b" style="left:674.00px;top:81.00px" width="34" height="34" viewBox="0 0 34 34"><path d="M1 21H12.5V32.5H1Z" fill="#dcdcdc" stroke="#777" stroke-width="0.8" stroke-linejoin="round"/><path d="M1 21L5 17H16.5L12.5 21Z" fill="#f0f0f0" stroke="#777" stroke-width="0.8" stroke-linejoin="round"/><path d="M12.5 21L16.5 17V28.5L12.5 32.5Z" fill="#b8b8b8" stroke="#777" stroke-width="0.8" stroke-linejoin="round"/><path d="M13.5 21H25V32.5H13.5Z" fill="#dcdcdc" stroke="#777" stroke-width="0.8" stroke-linejoin="round"/><path d="M13.5 21L17.5 17H29L25 21Z" fill="#f0f0f0" stroke="#777" stroke-width="0.8" stroke-linejoin="round"/><path d="M25 21L29 17V28.5L25 32.5Z" fill="#b8b8b8" stroke="#777" stroke-width="0.8" stroke-linejoin="round"/><path d="M1 9H12.5V20H1Z" fill="#6aaee4"/><path d="M1 9L5 5H16.5L12.5 9Z" fill="#8cc8f4"/><path d="M12.5 9L16.5 5V16L12.5 20Z" fill="#4a92d0"/><g transform="translate(23.5 9)"><path d="M0 -8L1.6 -3.2L6 -5.6L3.4 -1.4L8 0L3.4 1.4L6 5.6L1.6 3.2L0 8L-1.6 3.2L-6 5.6L-3.4 1.4L-8 0L-3.4 -1.4L-6 -5.6L-1.6 -3.2Z" fill="#f8a010"/></g></svg>
<svg class="b" style="left:719.00px;top:82.00px" width="31" height="32" viewBox="0 0 31 32"><path d="M1.5 8C1.5 3 5 1.5 8.5 1.5H13V11L9.5 14V24L2.5 30H1.5Z" fill="#b8b8b8" stroke="#666" stroke-width="1"/><path d="M9.5 4C9.5 2 13 2 13 4" fill="none" stroke="#666" stroke-width="0.8"/><path d="M17.5 14H22V5.5L28.5 11V30L22 24.5H17.5Z" fill="#dcdcdc" stroke="#666" stroke-width="1"/><path d="M10.5 14V20M20 8V12.5" stroke="#1a8ae0" stroke-width="1.3"/></svg>
<svg class="b" style="left:794.00px;top:81.00px" width="33" height="34" viewBox="0 0 33 34"><path d="M1.5 10.5L9.5 1.5H17V23L9.5 32H1.5Z" fill="#dcdcdc" stroke="#666" stroke-width="1"/><path d="M10.5 10.5L19 1.5V23L10.5 32Z" fill="#5cc47c"/><path d="M22.5 10.5L31.5 1.5V23L22.5 32Z" fill="#e89a64"/></svg>
<svg class="b" style="left:883.00px;top:89.00px" width="31" height="20" viewBox="0 0 31 20"><path d="M1 0.5V10M29 0.5V10" stroke="#555" stroke-width="1"/><path d="M2.5 5.2H27.5M5.5 3L2.5 5.2L5.5 7.4M24.5 3L27.5 5.2L24.5 7.4" fill="none" stroke="#555" stroke-width="1"/><rect x="0.8" y="11" width="28.4" height="6.6" fill="#f4a410"/><path d="M3.5 11V13.5M6.5 11V13.5M9.5 11V14.5M12.5 11V13.5M15.5 11V13.5M18.5 11V14.5M21.5 11V13.5M24.5 11V13.5M27 11V14.5" stroke="#a06800" stroke-width="0.7"/></svg>
<svg class="b" style="left:958.00px;top:82.00px" width="30" height="30" viewBox="0 0 30 30"><rect x="0.5" y="0.5" width="28.6" height="28.6" fill="#86ccfc" stroke="#3a90d0" stroke-width="1"/><path d="M0.5 21C4 14 8 10.5 11 13.5C14 16.5 16 22 19 21.5C21 21 22.5 17 25 18.5C27 19.6 28 22 29 23V29H0.5Z" fill="#3a92cc"/><circle cx="21" cy="8" r="3" fill="#ffffc8"/></svg>
<svg class="b" style="left:1028.00px;top:82.00px" width="35" height="32" viewBox="0 0 35 32"><path d="M2 9C2 4 6 1.5 10.5 1.5H24L31.5 10.5H17C13.5 10.5 11.5 13 11.5 16V27L2 19.5Z" fill="#fafafa" stroke="#555" stroke-width="1"/><path d="M10.5 1.5H24L31.5 10.5H17C15 10.5 13.6 11.2 12.6 12.4L5 4Z" fill="#5cc47c"/><path d="M16.5 1.5L23.5 10.5" stroke="#3a9a5a" stroke-width="0.8"/><path d="M2.5 11.5L11.5 19" stroke="#555" stroke-width="0.9"/><path d="M23.5 20.5L30 14.5L32 16.5L25.5 22.5Z" fill="#777"/><path d="M24 20C21 20.5 20 24 16.5 26.5C21.5 28 26 26 26.5 22Z" fill="#8a5a20"/></svg>
<div class="b" style="left:4.00px;top:141.50px;width:299.70px;height:24.00px;background:#f2f2f2;border:1px solid #c4c4c4;box-sizing:border-box;"></div>
<svg class="b" style="left:9.30px;top:150.00px" width="10" height="8" viewBox="0 0 10 8"><path d="M4.6 0.3V7.7L0 4ZM9.8 0.3V7.7L5.2 4Z" fill="#222"/></svg>
<span class="t" style="left:29.30px;top:146.23px;font-size:11px;line-height:15px;color:#444;transform:scaleX(0.9096);">BROWSER</span>
<svg class="b" style="left:282.60px;top:149.00px" width="10" height="10" viewBox="0 0 10 10"><circle cx="5" cy="5" r="4.7" fill="#1a1a1a"/><rect x="2.2" y="4.2" width="5.6" height="1.6" fill="#fff"/></svg>
<div class="b" style="left:299.30px;top:147.50px;width:1.00px;height:12.00px;background:#555;"></div>
<div class="b" style="left:301.30px;top:149.00px;width:0.70px;height:9.00px;background:#999;"></div>
<div class="b" style="left:40.40px;top:171.00px;width:147.00px;height:19.60px;background:rgba(240,240,240,.92);"></div>
<svg class="b" style="left:20.50px;top:175.50px" width="12" height="11" viewBox="0 0 12 11"><defs><linearGradient id="ad386" x1="0" y1="0" x2="1" y2="1"><stop offset="0.4" stop-color="#aaa"/><stop offset="1" stop-color="#222"/></linearGradient></defs><path d="M11 0.5V10.5H0.8Z" fill="url(#ad386)" stroke="#333" stroke-width="1" stroke-linejoin="round"/></svg>
<svg class="b" style="left:43.00px;top:175.50px" width="16" height="11" viewBox="0 0 16 11"><path d="M0.3 5.5C3.4 0.2 12.6 0.2 15.7 5.5C12.6 10.8 3.4 10.8 0.3 5.5Z" fill="#8a8a8a"/><circle cx="8" cy="5.5" r="3.4" fill="#f0f0f0"/><circle cx="8" cy="5.5" r="1.9" fill="#8a8a8a"/></svg>
<div class="b" style="left:65.20px;top:173.30px;width:97.80px;height:15.50px;background:#999;"></div>
<svg class="b" style="left:68.50px;top:173.80px" width="15" height="15" viewBox="0 0 15 15"><path d="M1 4.5L4 1H13.5V10L10.5 14H1Z" fill="#f4f4f8" stroke="#555" stroke-width="1"/><path d="M1.5 4.5H10.5V13.5M10.5 4.5L13.5 1.2" fill="none" stroke="#555" stroke-width="0.9"/><path d="M1.5 5H10V13.5H1.5Z" fill="#dcdce6"/></svg>
<span class="t" style="left:98.00px;top:173.68px;font-size:11.5px;line-height:15.5px;color:#fff;font-weight:bold;transform:scaleX(0.9856);">(Unsaved)</span>
<svg class="b" style="left:166.80px;top:174.50px" width="13" height="13" viewBox="0 0 13 13"><circle cx="6.5" cy="6.5" r="5.7" fill="#fff" stroke="#222" stroke-width="1.2"/><circle cx="6.5" cy="6.5" r="2.3" fill="#222"/></svg>
<div class="b" style="left:58.00px;top:195.30px;width:133.90px;height:19.50px;background:rgba(240,240,240,.92);"></div>
<svg class="b" style="left:40.20px;top:198.20px" width="10" height="14" viewBox="0 0 10 14"><path d="M1 1L8.8 7L1 13Z" fill="#e6e6e6" stroke="#333" stroke-width="1.4" stroke-linejoin="round"/></svg>
<svg class="b" style="left:61.00px;top:197.20px" width="16" height="16" viewBox="0 0 16 16"><path d="M15.35 6.51L15.35 9.49L13.13 10.11L13.12 10.14L14.25 12.14L12.14 14.25L10.14 13.12L10.11 13.13L9.49 15.35L6.51 15.35L5.89 13.13L5.86 13.12L3.86 14.25L1.75 12.14L2.88 10.14L2.87 10.11L0.65 9.49L0.65 6.51L2.87 5.89L2.88 5.86L1.75 3.86L3.86 1.75L5.86 2.88L5.89 2.87L6.51 0.65L9.49 0.65L10.11 2.87L10.14 2.88L12.14 1.75L14.25 3.86L13.12 5.86L13.13 5.89Z" fill="#8f8f8f"/><circle cx="8" cy="8" r="2.70" fill="#f0f0f0"/></svg>
<span class="t" style="left:91.10px;top:197.78px;font-size:11.5px;line-height:15.5px;color:#222;transform:scaleX(0.9211);">Document Settings</span>
<div class="b" style="left:58.00px;top:219.40px;width:110.00px;height:19.50px;background:rgba(240,240,240,.92);"></div>
<svg class="b" style="left:40.20px;top:222.30px" width="10" height="14" viewBox="0 0 10 14"><path d="M1 1L8.8 7L1 13Z" fill="#e6e6e6" stroke="#333" stroke-width="1.4" stroke-linejoin="round"/></svg>
<svg class="b" style="left:61.00px;top:221.80px" width="16" height="14" viewBox="0 0 16 14"><path d="M0 1.5h6l1 1.5h9v10.5h-16z" fill="#8f8f8f"/><path d="M0 3.6h16" stroke="#f0f0f0" stroke-width="0.8"/></svg>
<span class="t" style="left:91.50px;top:221.88px;font-size:11.5px;line-height:15.5px;color:#222;transform:scaleX(0.9500);">Named Views</span>
<div class="b" style="left:58.00px;top:243.40px;width:95.00px;height:19.60px;background:rgba(240,240,240,.92);"></div>
<svg class="b" style="left:40.20px;top:246.30px" width="10" height="14" viewBox="0 0 10 14"><path d="M1 1L8.8 7L1 13Z" fill="#e6e6e6" stroke="#333" stroke-width="1.4" stroke-linejoin="round"/></svg>
<svg class="b" style="left:60.90px;top:247.80px" width="16" height="11" viewBox="0 0 16 11"><path d="M0.6 5.5C3.6 0.6 12.4 0.6 15.4 5.5C12.4 10.4 3.6 10.4 0.6 5.5Z" fill="none" stroke="#a4a4a4" stroke-width="1"/><circle cx="8" cy="5.5" r="2.6" fill="none" stroke="#a4a4a4" stroke-width="1"/><path d="M2.5 0.2L13.5 10.8" stroke="#a4a4a4" stroke-width="1.1"/></svg>
<svg class="b" style="left:86.00px;top:245.80px" width="16" height="14" viewBox="0 0 16 14"><path d="M0 1.5h6l1 1.5h9v10.5h-16z" fill="#8f8f8f"/><path d="M0 3.6h16" stroke="#f0f0f0" stroke-width="0.8"/></svg>
<span class="t" style="left:116.30px;top:245.88px;font-size:11.5px;line-height:15.5px;color:#222;transform:scaleX(0.8866);">Origin</span>
<div class="b" style="left:58.00px;top:267.40px;width:102.70px;height:19.60px;background:rgba(240,240,240,.92);"></div>
<svg class="b" style="left:38.70px;top:271.70px" width="12" height="11" viewBox="0 0 12 11"><defs><linearGradient id="ad664" x1="0" y1="0" x2="1" y2="1"><stop offset="0.4" stop-color="#aaa"/><stop offset="1" stop-color="#222"/></linearGradient></defs><path d="M11 0.5V10.5H0.8Z" fill="url(#ad664)" stroke="#333" stroke-width="1" stroke-linejoin="round"/></svg>
<svg class="b" style="left:60.90px;top:271.70px" width="16" height="11" viewBox="0 0 16 11"><path d="M0.3 5.5C3.4 0.2 12.6 0.2 15.7 5.5C12.6 10.8 3.4 10.8 0.3 5.5Z" fill="#8a8a8a"/><circle cx="8" cy="5.5" r="3.4" fill="#f0f0f0"/><circle cx="8" cy="5.5" r="1.9" fill="#8a8a8a"/></svg>
<svg class="b" style="left:86.00px;top:269.70px" width="16" height="14" viewBox="0 0 16 14"><path d="M0 1.5h6l1 1.5h9v10.5h-16z" fill="#8f8f8f"/><path d="M0 3.6h16" stroke="#f0f0f0" stroke-width="0.8"/></svg>
<span class="t" style="left:116.30px;top:269.78px;font-size:11.5px;line-height:15.5px;color:#222;transform:scaleX(0.9214);">Bodies</span>
<svg class="b" style="left:0;top:0" width="1" height="1"><path d="M82.4 284.9l3 -2.6M88.0 284.9l3 -2.6M93.5 284.9l3 -2.6M99.1 284.9l3 -2.6M104.6 284.9l3 -2.6M110.2 284.9l3 -2.6M115.7 284.9l3 -2.6M121.2 284.9l3 -2.6M126.8 284.9l3 -2.6M132.3 284.9l3 -2.6M137.9 284.9l3 -2.6M143.4 284.9l3 -2.6M149.0 284.9l3 -2.6M154.6 284.9l3 -2.6" stroke="#5c7cae" stroke-width="1.7" fill="none"/></svg>
<div class="b" style="left:76.30px;top:291.40px;width:90.40px;height:19.60px;background:rgba(240,240,240,.92);"></div>
<svg class="b" style="left:79.00px;top:295.70px" width="16" height="11" viewBox="0 0 16 11"><path d="M0.3 5.5C3.4 0.2 12.6 0.2 15.7 5.5C12.6 10.8 3.4 10.8 0.3 5.5Z" fill="#8a8a8a"/><circle cx="8" cy="5.5" r="3.4" fill="#f0f0f0"/><circle cx="8" cy="5.5" r="1.9" fill="#8a8a8a"/></svg>
<svg class="b" style="left:104.30px;top:293.20px" width="16" height="16" viewBox="0 0 16 16"><defs><linearGradient id="bd" x1="0" y1="0" x2="1" y2="0"><stop offset="0" stop-color="#fff"/><stop offset="1" stop-color="#b8bccc"/></linearGradient></defs><path d="M1 3.5C1 0.5 15 0.5 15 3.5V12.5C15 15.5 1 15.5 1 12.5Z" fill="url(#bd)" stroke="#444" stroke-width="1.1"/><path d="M1 3.5C1 6.3 15 6.3 15 3.5" fill="none" stroke="#444" stroke-width="1"/></svg>
<span class="t" style="left:134.30px;top:293.78px;font-size:11.5px;line-height:15.5px;color:#222;transform:scaleX(0.9344);">Barb</span>
<svg class="b" style="left:0;top:0" width="1" height="1"><path d="M101.0 308.9l3 -2.6M106.5 308.9l3 -2.6M112.1 308.9l3 -2.6M117.7 308.9l3 -2.6M123.2 308.9l3 -2.6M128.8 308.9l3 -2.6M134.3 308.9l3 -2.6M139.8 308.9l3 -2.6M145.4 308.9l3 -2.6M150.9 308.9l3 -2.6M156.5 308.9l3 -2.6" stroke="#5c7cae" stroke-width="1.7" fill="none"/></svg>
<div class="b" style="left:58.00px;top:315.40px;width:114.60px;height:19.60px;background:rgba(240,240,240,.92);"></div>
<svg class="b" style="left:40.20px;top:318.20px" width="10" height="14" viewBox="0 0 10 14"><path d="M1 1L8.8 7L1 13Z" fill="#e6e6e6" stroke="#333" stroke-width="1.4" stroke-linejoin="round"/></svg>
<svg class="b" style="left:60.90px;top:319.70px" width="16" height="11" viewBox="0 0 16 11"><path d="M0.3 5.5C3.4 0.2 12.6 0.2 15.7 5.5C12.6 10.8 3.4 10.8 0.3 5.5Z" fill="#8a8a8a"/><circle cx="8" cy="5.5" r="3.4" fill="#f0f0f0"/><circle cx="8" cy="5.5" r="1.9" fill="#8a8a8a"/></svg>
<svg class="b" style="left:86.00px;top:317.70px" width="16" height="14" viewBox="0 0 16 14"><path d="M0 1.5h6l1 1.5h9v10.5h-16z" fill="#8f8f8f"/><path d="M0 3.6h16" stroke="#f0f0f0" stroke-width="0.8"/></svg>
<span class="t" style="left:116.30px;top:317.78px;font-size:11.5px;line-height:15.5px;color:#222;transform:scaleX(0.9386);">Sketches</span>
<div class="b" style="left:753.30px;top:141.30px;width:414.40px;height:23.20px;background:rgba(240,240,240,.95);"></div>
<svg class="b" style="left:758.00px;top:146.50px" width="12" height="13" viewBox="0 0 12 13"><path d="M3 6V3.8C3 0.4 9 0.4 9 3.8V6" fill="none" stroke="#e0242b" stroke-width="1.8"/><rect x="0.3" y="5.2" width="11.4" height="7.6" rx="1" fill="#e0242b"/></svg>
<span class="t" style="left:778.30px;top:145.68px;font-size:11.5px;line-height:15.5px;color:#222;font-weight:bold;transform:scaleX(0.9406);">Read-Only:</span>
<span class="t" style="left:858.00px;top:145.03px;font-size:11px;line-height:15px;color:#222;transform:scaleX(0.9685);">Document limit has been reached</span>
<div class="b" style="left:1032.30px;top:142.00px;width:1.00px;height:22.00px;background:#d8d8d8;"></div>
<span class="t" style="left:1046.00px;top:145.03px;font-size:11px;line-height:15px;color:#1a78c2;transform:scaleX(0.9530);">My Editable Documents</span>
<div class="b" style="left:1546.50px;top:261.20px;width:369.10px;height:580.00px;background:#f2f2f2;border:1px solid #c4c4c4;box-sizing:border-box;box-shadow:0 1px 3px rgba(0,0,0,.15);"></div>
<div class="b" style="left:1546.50px;top:285.00px;width:369.10px;height:1.00px;background:#d0d0d0;"></div>
<div class="b" style="left:1548.60px;top:268.00px;width:0.80px;height:11.50px;background:#555;"></div>
<div class="b" style="left:1550.60px;top:269.50px;width:0.60px;height:8.50px;background:#999;"></div>
<svg class="b" style="left:1558.00px;top:269.00px" width="10" height="10" viewBox="0 0 10 10"><circle cx="5" cy="5" r="4.6" fill="#1a1a1a"/><rect x="2.2" y="4.2" width="5.6" height="1.6" fill="#fff"/></svg>
<span class="t" style="left:1571.30px;top:266.43px;font-size:11px;line-height:15px;color:#444;transform:scaleX(0.8646);">HOLE</span>
<svg class="b" style="left:1901.00px;top:270.00px" width="10" height="8" viewBox="0 0 10 8"><path d="M0.2 0.3V7.7L4.8 4ZM5.2 0.3V7.7L9.8 4Z" fill="#222"/></svg>
<span class="t" style="left:1559.30px;top:294.08px;font-size:11.5px;line-height:15.5px;color:#222;transform:scaleX(0.8963);">Placement</span>
<div class="b" style="left:1641.70px;top:287.60px;width:22.80px;height:26.70px;background:#0c96d9;"></div>
<svg class="b" style="left:1645.50px;top:293.50px" width="15" height="15" viewBox="0 0 15 15"><rect x="0.5" y="0.5" width="13.6" height="13.6" fill="#d4d4d4" stroke="#aab" stroke-width="0.6"/><circle cx="3.4" cy="3.6" r="2" fill="#5b9bd5" stroke="#2b6cb0" stroke-width="0.6"/></svg>
<svg class="b" style="left:1673.80px;top:293.50px" width="15" height="15" viewBox="0 0 15 15"><rect x="0.6" y="0.6" width="13.8" height="13.8" fill="#f4f4f4" stroke="#555" stroke-width="1"/><circle cx="4.3" cy="4.3" r="2.1" fill="#5b9bd5" stroke="#2b6cb0" stroke-width="0.5"/><circle cx="10.7" cy="4.3" r="2.1" fill="#5b9bd5" stroke="#2b6cb0" stroke-width="0.5"/><circle cx="4.3" cy="10.7" r="2.1" fill="#5b9bd5" stroke="#2b6cb0" stroke-width="0.5"/><circle cx="10.7" cy="10.7" r="2.1" fill="#5b9bd5" stroke="#2b6cb0" stroke-width="0.5"/></svg>
<span class="t" style="left:1559.30px;top:324.08px;font-size:11.5px;line-height:15.5px;color:#222;transform:scaleX(0.9035);">Face</span>
<div class="b" style="left:1641.70px;top:317.60px;width:77.90px;height:26.80px;background:#0c96d9;border-radius:1px;"></div>
<svg class="b" style="left:1648.50px;top:322.50px" width="11" height="17" viewBox="0 0 11 17"><path d="M1 1V13.2L4 10.4L6.2 15.6L8.2 14.7L6 9.6H10Z" fill="#fff" stroke="#222" stroke-width="1" stroke-linejoin="round"/></svg>
<span class="t" style="left:1663.60px;top:324.08px;font-size:11.5px;line-height:15.5px;color:#fff;transform:scaleX(0.9422);">1 selected</span>
<svg class="b" style="left:1730.50px;top:326.50px" width="9" height="9" viewBox="0 0 9 9"><path d="M0.8 0.8L8.2 8.2M8.2 0.8L0.8 8.2" stroke="#333" stroke-width="1.5"/></svg>
<span class="t" style="left:1559.30px;top:354.18px;font-size:11.5px;line-height:15.5px;color:#222;transform:scaleX(0.9517);">Reference</span>
<div class="b" style="left:1641.70px;top:347.70px;width:41.50px;height:26.70px;background:#fff;border:1px solid #dcdcdc;box-sizing:border-box;border-radius:2px;"></div>
<span class="t" style="left:1647.40px;top:354.18px;font-size:11.5px;line-height:15.5px;color:#222;transform:scaleX(0.9323);">Select</span>
<span class="t" style="left:1559.30px;top:384.28px;font-size:11.5px;line-height:15.5px;color:#222;transform:scaleX(0.9517);">Reference</span>
<div class="b" style="left:1641.70px;top:377.70px;width:41.50px;height:26.80px;background:#fff;border:1px solid #dcdcdc;box-sizing:border-box;border-radius:2px;"></div>
<span class="t" style="left:1647.40px;top:384.28px;font-size:11.5px;line-height:15.5px;color:#222;transform:scaleX(0.9323);">Select</span>
<div class="b" style="left:1556.60px;top:418.70px;width:0;height:0;border-left:4.00px solid transparent;border-right:4.00px solid transparent;border-top:5.00px solid #222"></div>
<span class="t" style="left:1572.20px;top:414.28px;font-size:11.5px;line-height:15.5px;color:#333;font-weight:bold;transform:scaleX(0.9774);">Shape Settings</span>
<span class="t" style="left:1561.00px;top:448.28px;font-size:11.5px;line-height:15.5px;color:#222;transform:scaleX(0.9282);">Extents</span>
<span class="t" style="left:1561.00px;top:486.48px;font-size:11.5px;line-height:15.5px;color:#222;transform:scaleX(0.9055);">Hole Type</span>
<span class="t" style="left:1561.00px;top:516.18px;font-size:11.5px;line-height:15.5px;color:#222;transform:scaleX(0.9137);">Hole Tap Type</span>
<span class="t" style="left:1561.00px;top:546.08px;font-size:11.5px;line-height:15.5px;color:#222;transform:scaleX(0.8739);">Drill Point</span>
<div class="b" style="left:1728.60px;top:441.50px;width:105.90px;height:26.50px;background:#0c96d9;"></div>
<svg class="b" style="left:1732.50px;top:447.50px" width="15" height="14" viewBox="0 0 15 14"><path d="M0.8 0V14M14.2 0V14" stroke="#102040" stroke-width="1.5"/><path d="M2.2 7H12.8M4.8 4.6L2.2 7L4.8 9.4M10.2 4.6L12.8 7L10.2 9.4" fill="none" stroke="#102040" stroke-width="1.1"/></svg>
<span class="t" style="left:1752.40px;top:448.28px;font-size:11.5px;line-height:15.5px;color:#fff;transform:scaleX(0.9342);">Distance</span>
<div class="b" style="left:1822.30px;top:453.30px;width:0;height:0;border-left:3.50px solid transparent;border-right:3.50px solid transparent;border-top:4.00px solid #fff"></div>
<svg class="b" style="left:1848.50px;top:447.50px" width="13" height="15" viewBox="0 0 13 15"><path d="M3 6.5L9 0.8M9 0.8H5.8M9 0.8V4" fill="none" stroke="#555" stroke-width="1"/><path d="M10 8L4 13.8M4 13.8H7.2M4 13.8V10.6" fill="none" stroke="#1a90e0" stroke-width="1.2"/></svg>
<svg class="b" style="left:1826.00px;top:516.00px" width="9" height="14" viewBox="0 0 9 14"><rect x="0" y="0" width="9" height="14" fill="#bbb"/><path d="M0 6L6 0M0 11L9 2M3 14L9 8" stroke="#444" stroke-width="1"/></svg>
<div class="b" style="left:1728.60px;top:540.20px;width:22.60px;height:25.60px;background:#0c96d9;"></div>
<svg class="b" style="left:1732.40px;top:545.50px" width="15" height="15" viewBox="0 0 15 15"><rect x="0" y="0" width="15" height="15" fill="#c8c8c8"/><path d="M0 4L4 0M0 9L9 0M0 14L14 0M5 15L15 5M10 15L15 10" stroke="#666" stroke-width="0.8"/><path d="M3 0H12V11H3Z" fill="#2a2a2a"/></svg>
<svg class="b" style="left:1761.00px;top:545.50px" width="15" height="15" viewBox="0 0 15 15"><rect x="0" y="0" width="15" height="15" fill="#c8c8c8"/><path d="M0 4L4 0M0 9L9 0M0 14L14 0M5 15L15 5M10 15L15 10" stroke="#666" stroke-width="0.8"/><path d="M3 0H12V8L7.5 12.5L3 8Z" fill="#2a2a2a"/></svg>
<div class="b" style="left:1729.40px;top:468.60px;width:95.90px;height:70.80px;background:#fff;border:1px solid #8a8a8a;box-sizing:border-box;border-radius:0 0 3px 3px;box-shadow:1px 2px 3px rgba(0,0,0,.2);"></div>
<div class="b" style="left:1734.00px;top:515.00px;width:86.70px;height:21.60px;background:#d9d9d9;"></div>
<svg class="b" style="left:1735.00px;top:474.50px" width="15" height="14" viewBox="0 0 15 14"><path d="M0.8 0V14M14.2 0V14" stroke="#102040" stroke-width="1.5"/><path d="M2.2 7H12.8M4.8 4.6L2.2 7L4.8 9.4M10.2 4.6L12.8 7L10.2 9.4" fill="none" stroke="#102040" stroke-width="1.1"/></svg>
<span class="t" style="left:1753.90px;top:474.98px;font-size:11.5px;line-height:15.5px;color:#333;transform:scaleX(0.9342);">Distance</span>
<svg class="b" style="left:1735.00px;top:496.50px" width="15" height="15" viewBox="0 0 15 15"><path d="M0 7H6.5M4 4.6L6.5 7L4 9.4" fill="none" stroke="#222" stroke-width="1.1"/><path d="M8.6 3V10" stroke="#e01010" stroke-width="1.6"/><path d="M10.2 0V14H14.6" fill="none" stroke="#102040" stroke-width="1.5"/></svg>
<span class="t" style="left:1753.90px;top:497.18px;font-size:11.5px;line-height:15.5px;color:#333;transform:scaleX(0.8891);">To</span>
<svg class="b" style="left:1735.00px;top:518.00px" width="16" height="16" viewBox="0 0 16 16"><path d="M5 0V5M11 0V5" stroke="#102040" stroke-width="1.5"/><path d="M0 8H14.5M12 5.4L14.8 8L12 10.6" fill="none" stroke="#222" stroke-width="1.1"/><path d="M4.8 10.5V15.2H11.2V10.5" fill="none" stroke="#102040" stroke-width="1.5"/></svg>
<span class="t" style="left:1753.90px;top:519.28px;font-size:11.5px;line-height:15.5px;color:#333;transform:scaleX(0.9625);">All</span>
<div class="b" style="left:1738.30px;top:583.30px;width:119.30px;height:23.90px;background:#fff;border:1px solid #c8c8c8;box-sizing:border-box;"></div>
<span class="t" style="left:1741.40px;top:588.48px;font-size:11.5px;line-height:15.5px;color:#222;transform:scaleX(0.8695);">4 mm</span>
<div class="b" style="left:1738.30px;top:738.30px;width:119.30px;height:23.90px;background:#fff;border:1px solid #c8c8c8;box-sizing:border-box;"></div>
<span class="t" style="left:1741.40px;top:743.48px;font-size:11.5px;line-height:15.5px;color:#222;transform:scaleX(0.8873);">3.00 mm</span>
<svg class="b" style="left:0;top:0" width="1920" height="1080" viewBox="0 0 1920 1080"><path d="M1585.8 640.5V594H1738.3M1654 750.2H1738.3" fill="none" stroke="#8a8a8a" stroke-width="1"/><rect x="1606.2" y="644" width="43.3" height="92.4" rx="2" fill="#c8c8c8" stroke="#8c8c8c" stroke-width="2"/><path d="M1573.3 643.5H1600.3M1573.3 735.8H1600.3M1605.8 742V757.4M1649.7 742V757.4" stroke="#f03040" stroke-width="1.1"/><path d="M1585.8 648V732M1610 750.2H1646" stroke="#4a7ab5" stroke-width="1.3"/><path d="M1585.8 645.5L1582.6 652H1589ZM1585.8 734.2L1582.6 727.7H1589ZM1607.6 750.2L1614 747V753.4ZM1648 750.2L1641.6 747V753.4Z" fill="#4a7ab5"/></svg>
<svg class="b" style="left:1556.00px;top:784.20px" width="7" height="9" viewBox="0 0 7 9"><path d="M0.3 0.3V8.7L6.5 4.5Z" fill="#222"/></svg>
<span class="t" style="left:1571.00px;top:781.88px;font-size:11.5px;line-height:15.5px;color:#333;font-weight:bold;transform:scaleX(0.9885);">Objects To Cut</span>
<div class="b" style="left:1547.50px;top:805.20px;width:367.10px;height:1.00px;background:#d0d0d0;"></div>
<svg class="b" style="left:1555.00px;top:817.60px" width="12" height="12" viewBox="0 0 12 12"><circle cx="6" cy="6" r="6" fill="#111"/><rect x="5" y="5" width="2.2" height="4.6" fill="#fff"/><rect x="4.2" y="5" width="2" height="1" fill="#fff"/><rect x="4.2" y="8.8" width="3.8" height="1" fill="#fff"/><circle cx="6" cy="3" r="1.2" fill="#fff"/></svg>
<div class="b" style="left:1774.00px;top:814.40px;width:59.60px;height:18.20px;background:#e6e6e6;border:1px solid #c2c2c2;box-sizing:border-box;"></div>
<span class="t" style="left:1795.30px;top:815.74px;font-size:12px;line-height:16px;color:#444;transform:scaleX(0.9517);">OK</span>
<div class="b" style="left:1844.00px;top:814.40px;width:59.60px;height:18.20px;background:#e6e6e6;border:1px solid #c2c2c2;box-sizing:border-box;"></div>
<span class="t" style="left:1854.40px;top:815.74px;font-size:12px;line-height:16px;color:#444;transform:scaleX(1.0280);">Cancel</span>
<div class="b" style="left:1165.00px;top:446.30px;width:107.00px;height:21.70px;background:rgba(238,238,238,.95);"></div>
<svg class="b" style="left:1168.50px;top:448.50px" width="6" height="18" viewBox="0 0 6 18"><rect x="1" y="1" width="0.9" height="0.9" fill="#aaa"/><rect x="3.2" y="2.6" width="0.9" height="0.9" fill="#aaa"/><rect x="1" y="4.2" width="0.9" height="0.9" fill="#aaa"/><rect x="3.2" y="5.8" width="0.9" height="0.9" fill="#aaa"/><rect x="1" y="7.4" width="0.9" height="0.9" fill="#aaa"/><rect x="3.2" y="9" width="0.9" height="0.9" fill="#aaa"/><rect x="1" y="10.6" width="0.9" height="0.9" fill="#aaa"/><rect x="3.2" y="12.2" width="0.9" height="0.9" fill="#aaa"/><rect x="1" y="13.8" width="0.9" height="0.9" fill="#aaa"/><rect x="3.2" y="15.4" width="0.9" height="0.9" fill="#aaa"/><rect x="1" y="17" width="0.9" height="0.9" fill="#aaa"/></svg>
<div class="b" style="left:1176.30px;top:447.60px;width:0.90px;height:19.20px;background:#cfcfcf;"></div>
<div class="b" style="left:1178.90px;top:447.20px;width:69.00px;height:19.90px;background:#fff;border:1px solid #c0c0c0;box-sizing:border-box;"></div>
<span class="t" style="left:1210.00px;top:449.68px;font-size:11.5px;line-height:15.5px;color:#334;transform:scaleX(0.9849);">4</span>
<svg class="b" style="left:1258.80px;top:449.60px" width="4" height="14" viewBox="0 0 4 14"><circle cx="1.7" cy="1.8" r="1.4" fill="#777"/><circle cx="1.7" cy="6.8" r="1.4" fill="#777"/><circle cx="1.7" cy="11.8" r="1.4" fill="#777"/></svg>
<div class="b" style="left:4.00px;top:953.30px;width:299.70px;height:24.10px;background:#f2f2f2;border:1px solid #c4c4c4;box-sizing:border-box;"></div>
<span class="t" style="left:29.30px;top:958.03px;font-size:11px;line-height:15px;color:#444;transform:scaleX(0.8790);">COMMENTS</span>
<svg class="b" style="left:282.60px;top:960.50px" width="10" height="10" viewBox="0 0 10 10"><circle cx="5" cy="5" r="4.7" fill="#1a1a1a"/><rect x="2.2" y="4.2" width="5.6" height="1.6" fill="#fff"/><rect x="4.2" y="2.2" width="1.6" height="5.6" fill="#fff"/></svg>
<div class="b" style="left:299.30px;top:959.50px;width:1.00px;height:12.00px;background:#555;"></div>
<div class="b" style="left:301.30px;top:961.00px;width:0.70px;height:9.00px;background:#999;"></div>
<div class="b" style="left:841.30px;top:953.90px;width:236.30px;height:23.70px;background:rgba(240,240,240,.95);"></div>
<svg class="b" style="left:844.40px;top:957.70px" width="16" height="16" viewBox="0 0 16 16"><ellipse cx="8" cy="9" rx="7" ry="3" fill="none" stroke="#333" stroke-width="1.1"/><path d="M8 1V15M8 1L5.8 3.6M8 1L10.2 3.6" fill="none" stroke="#333" stroke-width="1.2"/><path d="M3 13.5L1 10.5L4.6 10.8Z" fill="#333"/></svg>
<div class="b" style="left:864.80px;top:964.45px;width:0;height:0;border-left:3.00px solid transparent;border-right:3.00px solid transparent;border-top:3.50px solid #333"></div>
<svg class="b" style="left:877.00px;top:957.70px" width="16" height="16" viewBox="0 0 16 16"><path d="M2 6.5H14V14.5H2ZM4.5 9H11.5V12H4.5Z" fill="none" stroke="#333" stroke-width="1.1"/><path d="M2.5 6.5L4 2.5H8L9 4L13 1.5" fill="none" stroke="#333" stroke-width="1.1"/></svg>
<svg class="b" style="left:902.60px;top:957.70px" width="16" height="16" viewBox="0 0 16 16"><path d="M4.5 9V3.2C4.5 2 6.2 2 6.2 3.2V7.5V1.8C6.2 0.6 8 0.6 8 1.8V7.5V2.2C8 1 9.8 1 9.8 2.2V7.8V3.8C9.8 2.6 11.5 2.6 11.5 3.8V10.5C11.5 13 10.5 15 8 15C5.5 15 4.5 13.5 3 11L1.5 8.6C1 7.6 2.4 6.8 3.2 7.8Z" fill="#fff" stroke="#333" stroke-width="1"/></svg>
<svg class="b" style="left:928.30px;top:957.70px" width="16" height="16" viewBox="0 0 16 16"><circle cx="6" cy="7" r="4.3" fill="#fff" stroke="#333" stroke-width="1.3"/><path d="M9 10.4L14 15" stroke="#333" stroke-width="2"/><path d="M11.5 2.5H15.5M13.5 0.5V4.5M11.8 6.6H15.2" stroke="#333" stroke-width="1"/></svg>
<svg class="b" style="left:953.80px;top:957.20px" width="18" height="17" viewBox="0 0 18 17"><rect x="0.7" y="0.7" width="14" height="13" fill="none" stroke="#333" stroke-width="1" stroke-dasharray="2.2 1.6"/><circle cx="7.6" cy="7.2" r="4.6" fill="#fff" stroke="#333" stroke-width="1.3"/><path d="M11 10.8L16 15.5" stroke="#333" stroke-width="2.2"/></svg>
<div class="b" style="left:976.00px;top:964.45px;width:0;height:0;border-left:3.00px solid transparent;border-right:3.00px solid transparent;border-top:3.50px solid #333"></div>
<svg class="b" style="left:987.70px;top:957.70px" width="16" height="16" viewBox="0 0 16 16"><rect x="0.7" y="1.2" width="14.6" height="10" fill="#fff" stroke="#333" stroke-width="1.2"/><rect x="2.6" y="3.1" width="10.8" height="6.2" fill="#8fb6e0"/><path d="M5.5 11.5V13.8H3.5V15H12.5V13.8H10.5V11.5" fill="#888" stroke="#333" stroke-width="0.8"/></svg>
<div class="b" style="left:1006.50px;top:964.45px;width:0;height:0;border-left:3.00px solid transparent;border-right:3.00px solid transparent;border-top:3.50px solid #333"></div>
<svg class="b" style="left:1018.60px;top:957.70px" width="16" height="16" viewBox="0 0 16 16"><rect x="0.5" y="0.5" width="15" height="15" fill="#ddd"/><path d="M0.5 0.5V15.5M0.5 0.5H15.5" stroke="#333" stroke-width="0.9"/><path d="M3 0.5V15.5M0.5 3H15.5" stroke="#333" stroke-width="0.9"/><path d="M5.5 0.5V15.5M0.5 5.5H15.5" stroke="#333" stroke-width="0.9"/><path d="M8 0.5V15.5M0.5 8H15.5" stroke="#333" stroke-width="0.9"/><path d="M10.5 0.5V15.5M0.5 10.5H15.5" stroke="#333" stroke-width="0.9"/><path d="M13 0.5V15.5M0.5 13H15.5" stroke="#333" stroke-width="0.9"/><path d="M15.5 0.5V15.5M0.5 15.5H15.5" stroke="#333" stroke-width="0.9"/></svg>
<div class="b" style="left:1037.00px;top:964.45px;width:0;height:0;border-left:3.00px solid transparent;border-right:3.00px solid transparent;border-top:3.50px solid #333"></div>
<svg class="b" style="left:1049.00px;top:958.70px" width="16" height="14" viewBox="0 0 16 14"><rect x="0.6" y="0.6" width="6.6" height="5.4" fill="#8fb6e0" stroke="#2a4a80" stroke-width="1.1"/><rect x="8.8" y="0.6" width="6.6" height="5.4" fill="#8fb6e0" stroke="#2a4a80" stroke-width="1.1"/><rect x="0.6" y="7.8" width="6.6" height="5.4" fill="#8fb6e0" stroke="#2a4a80" stroke-width="1.1"/><rect x="8.8" y="7.8" width="6.6" height="5.4" fill="#8fb6e0" stroke="#2a4a80" stroke-width="1.1"/></svg>
<div class="b" style="left:1067.90px;top:964.45px;width:0;height:0;border-left:3.00px solid transparent;border-right:3.00px solid transparent;border-top:3.50px solid #333"></div>
<span class="t" style="left:1752.40px;top:958.58px;font-size:11.5px;line-height:15.5px;color:#222;font-weight:bold;transform:scaleX(0.9652);">1 Face | Area : 31.416 mm^2</span>
<div class="b" style="left:0.00px;top:983.00px;width:1920.00px;height:49.00px;background:#f2f2f2;"></div>
<div class="b" style="left:0.00px;top:982.40px;width:1920.00px;height:1.00px;background:#d2d2d2;"></div>
<svg class="b" style="left:10.70px;top:1000.30px" width="13" height="15" viewBox="0 0 13 15"><rect x="0.3" y="0.5" width="2" height="14" fill="#111"/><path d="M12.6 0.5V14.5L3 7.5Z" fill="#111"/></svg>
<svg class="b" style="left:35.00px;top:1002.30px" width="13.5" height="11" viewBox="0 0 13.5 11"><path d="M8.6 0V11L0.3 5.5Z" fill="#111"/><rect x="10.6" y="2.3" width="2" height="6.4" fill="#111"/></svg>
<svg class="b" style="left:60.70px;top:1000.30px" width="12.5" height="15" viewBox="0 0 12.5 15"><path d="M0.5 0.3V14.7L12 7.5Z" fill="#111"/></svg>
<svg class="b" style="left:85.00px;top:1002.30px" width="13.5" height="11" viewBox="0 0 13.5 11"><path d="M4.9 0V11L13.2 5.5Z" fill="#111"/><rect x="0.9" y="2.3" width="2" height="6.4" fill="#111"/></svg>
<svg class="b" style="left:110.70px;top:1000.30px" width="13" height="15" viewBox="0 0 13 15"><rect x="10.7" y="0.5" width="2" height="14" fill="#111"/><path d="M0.4 0.5V14.5L10 7.5Z" fill="#111"/></svg>
<svg class="b" style="left:145.00px;top:998.00px" width="18" height="18" viewBox="0 0 18 18"><path d="M1 4.5V14C1 17.6 17 17.6 17 14V4.5Z" fill="#6aaee4"/><ellipse cx="9" cy="4.5" rx="8" ry="3.2" fill="#8cc8f4"/></svg>
<svg class="b" style="left:169.00px;top:998.00px" width="18" height="18" viewBox="0 0 18 18"><path d="M1 4.5V14C1 17.6 17 17.6 17 14V4.5Z" fill="#6aaee4"/><ellipse cx="9" cy="4.5" rx="8" ry="3.2" fill="#8cc8f4"/></svg>
<svg class="b" style="left:193.00px;top:998.00px" width="18" height="18" viewBox="0 0 18 18"><path d="M1.5 4.5L4.5 1.5H12.5V11.5L9.5 14.5H1.5Z" fill="#6aaee4"/><path d="M1.5 4.5L4.5 1.5H12.5L9.5 4.5Z" fill="#8cc8f4"/><path d="M9.5 4.5L12.5 1.5V11.5L9.5 14.5Z" fill="#4a92d0"/><path d="M1.5 14.5H9.5L12.5 11.5V13L9.5 16H1.5Z" fill="#b8b8b8"/><path d="M15.5 14.5V2.5M14 4.4L15.5 2L17 4.4" fill="none" stroke="#222" stroke-width="1"/></svg>
<svg class="b" style="left:217.00px;top:998.00px" width="18" height="18" viewBox="0 0 18 18"><path d="M1.5 4.5L4.5 1.5H12.5V11.5L9.5 14.5H1.5Z" fill="#6aaee4"/><path d="M1.5 4.5L4.5 1.5H12.5L9.5 4.5Z" fill="#8cc8f4"/><path d="M9.5 4.5L12.5 1.5V11.5L9.5 14.5Z" fill="#4a92d0"/><path d="M1.5 14.5H9.5L12.5 11.5V13L9.5 16H1.5Z" fill="#b8b8b8"/><path d="M15.5 14.5V2.5M14 4.4L15.5 2L17 4.4" fill="none" stroke="#222" stroke-width="1"/></svg>
<svg class="b" style="left:241.00px;top:998.00px" width="18" height="18" viewBox="0 0 18 18"><path d="M1.5 8.5L8 2.5H14.5L16.5 5V14.5L14 16.5H4L1.5 14.5Z" fill="#dcdcdc" stroke="#555" stroke-width="1"/><path d="M2.5 8L8.2 3L12 6.2L6 11.5Z" fill="#6aaee4"/><path d="M16.5 14.5H4" stroke="#555" stroke-width="0.6" fill="none"/></svg>
<svg class="b" style="left:265.00px;top:998.00px" width="18" height="18" viewBox="0 0 18 18"><path d="M1.5 8.5L8 2.5H14.5L16.5 5V14.5L14 16.5H4L1.5 14.5Z" fill="#dcdcdc" stroke="#555" stroke-width="1"/><path d="M2.5 8L8.2 3L12 6.2L6 11.5Z" fill="#6aaee4"/><path d="M16.5 14.5H4" stroke="#555" stroke-width="0.6" fill="none"/></svg>
<svg class="b" style="left:289.00px;top:998.00px" width="18" height="18" viewBox="0 0 18 18"><path d="M1.5 8.5L8 2.5H14.5L16.5 5V14.5L14 16.5H4L1.5 14.5Z" fill="#dcdcdc" stroke="#555" stroke-width="1"/><path d="M2.5 8L8.2 3L12 6.2L6 11.5Z" fill="#6aaee4"/><path d="M16.5 14.5H4" stroke="#555" stroke-width="0.6" fill="none"/></svg>
<svg class="b" style="left:313.00px;top:998.00px" width="18" height="18" viewBox="0 0 18 18"><path d="M1.5 8.5L3.5 6.5H7V3.5L9 1.5H16.5V9L14.5 11H11V14L9 16H1.5Z" fill="#6aaee4"/><path d="M7 3.5L9 1.5H16.5L14.5 3.5Z" fill="#8cc8f4"/><path d="M14.5 3.5L16.5 1.5V9L14.5 11ZM9 16L11 14V11H9Z" fill="#4a92d0"/></svg>
<svg class="b" style="left:337.00px;top:998.00px" width="18" height="18" viewBox="0 0 18 18"><path d="M1 4.5V14C1 17.6 17 17.6 17 14V4.5Z" fill="#6aaee4"/><ellipse cx="9" cy="4.5" rx="8" ry="3.2" fill="#8cc8f4"/></svg>
<svg class="b" style="left:361.00px;top:998.00px" width="18" height="18" viewBox="0 0 18 18"><path d="M3.5 1.5H14.5V16.5H3.5Z" fill="#dcdcdc" stroke="#999" stroke-width="0.8"/><path d="M1 6L17 3M1 9.5L17 6.5M1 13L17 10M1 16L17 13.5" stroke="#3a90d8" stroke-width="1.6" fill="none"/></svg>
<svg class="b" style="left:385.00px;top:998.00px" width="18" height="18" viewBox="0 0 18 18"><path d="M1.5 5L4.5 2H16.5V13.5L13.5 16.5H1.5Z" fill="#dcdcdc" stroke="#555" stroke-width="1"/><path d="M1.5 5H13.5V16.5M13.5 5L16.5 2" fill="none" stroke="#555" stroke-width="1"/><path d="M4.5 8H10.5V14H4.5Z" fill="#f6f6f6" stroke="#555" stroke-width="1"/><path d="M4.5 2H16.5L13.5 5H9Z" fill="#6aaee4"/></svg>
<svg class="b" style="left:409.00px;top:998.00px" width="18" height="18" viewBox="0 0 18 18"><path d="M1.5 5L4.5 2H16.5V13.5L13.5 16.5H1.5Z" fill="#dcdcdc" stroke="#555" stroke-width="1"/><path d="M1.5 5H13.5V16.5M13.5 5L16.5 2" fill="none" stroke="#555" stroke-width="1"/><path d="M4.5 8H10.5V14H4.5Z" fill="#f6f6f6" stroke="#555" stroke-width="1"/><path d="M4.5 2H16.5L13.5 5H9Z" fill="#6aaee4"/></svg>
<svg class="b" style="left:433.00px;top:998.00px" width="18" height="18" viewBox="0 0 18 18"><path d="M1.5 7C1.5 4 4 1.5 8 1.5C13 1.5 16.5 5 16.5 9.5V13.5L14 16.5H1.5Z" fill="#dcdcdc" stroke="#555" stroke-width="1"/><path d="M7 2C12 2 15.5 5.5 16.2 9L13.5 12C13 8 10.5 5 6 4.6Z" fill="#6aaee4"/></svg>
<svg class="b" style="left:457.00px;top:998.00px" width="18" height="18" viewBox="0 0 18 18"><rect x="2" y="2.5" width="12" height="12" fill="none" stroke="#1a6ac0" stroke-width="1.2" stroke-dasharray="3 2"/><rect x="0.5" y="1" width="3" height="3" fill="#1a6ac0"/><rect x="12.5" y="1" width="3" height="3" fill="#1a6ac0"/><rect x="0.5" y="13" width="3" height="3" fill="#1a6ac0"/><path d="M9 15.5L15.5 9L17.5 11L11 17.5L8.5 18Z" fill="#f0a020"/><path d="M14.8 9.6L16.4 8L18.2 9.8L16.6 11.4Z" fill="#e03030"/></svg>
<svg class="b" style="left:481.00px;top:998.00px" width="18" height="18" viewBox="0 0 18 18"><path d="M1.5 4.5L4.5 1.5H12.5V11.5L9.5 14.5H1.5Z" fill="#6aaee4"/><path d="M1.5 4.5L4.5 1.5H12.5L9.5 4.5Z" fill="#8cc8f4"/><path d="M9.5 4.5L12.5 1.5V11.5L9.5 14.5Z" fill="#4a92d0"/><path d="M1.5 14.5H9.5L12.5 11.5V13L9.5 16H1.5Z" fill="#b8b8b8"/><path d="M15.5 14.5V2.5M14 4.4L15.5 2L17 4.4" fill="none" stroke="#222" stroke-width="1"/></svg>
<svg class="b" style="left:505.00px;top:998.00px" width="18" height="18" viewBox="0 0 18 18"><path d="M9 0.5L12 4H10V8H14V6L17.5 9L14 12V10H10V14H12L9 17.5L6 14H8V10H4V12L0.5 9L4 6V8H8V4H6Z" fill="#2a2a2a"/></svg>
<svg class="b" style="left:529.00px;top:998.00px" width="18" height="18" viewBox="0 0 18 18"><path d="M9 0.5L12 4H10V8H14V6L17.5 9L14 12V10H10V14H12L9 17.5L6 14H8V10H4V12L0.5 9L4 6V8H8V4H6Z" fill="#2a2a2a"/></svg>
<svg class="b" style="left:553.00px;top:998.00px" width="18" height="18" viewBox="0 0 18 18"><path d="M1.5 8.5L3.5 6.5H7V3.5L9 1.5H16.5V9L14.5 11H11V14L9 16H1.5Z" fill="#6aaee4"/><path d="M7 3.5L9 1.5H16.5L14.5 3.5Z" fill="#8cc8f4"/><path d="M14.5 3.5L16.5 1.5V9L14.5 11ZM9 16L11 14V11H9Z" fill="#4a92d0"/></svg>
<svg class="b" style="left:0;top:0" width="1920" height="1080" viewBox="0 0 1920 1080"><path d="M154 1023.3H562M154 1019V1023.3M178 1019V1023.3M202 1019V1023.3M226 1019V1023.3M250 1019V1023.3M274 1019V1023.3M298 1019V1023.3M322 1019V1023.3M346 1019V1023.3M370 1019V1023.3M394 1019V1023.3M418 1019V1023.3M442 1019V1023.3M466 1019V1023.3M490 1019V1023.3M514 1019V1023.3M538 1019V1023.3M562 1019V1023.3" fill="none" stroke="#c6c6c6" stroke-width="1.7"/><path d="M574 996V1024.6" stroke="#4a4a4a" stroke-width="2"/><path d="M568 993.3H580.4V995L574.2 1001.6L568 995Z" fill="#555"/><path d="M314.6 994.4L318 990.2M320 994.4L323.4 990.2M325.4 994.4L328.8 990.2" stroke="#333" stroke-width="1.8"/></svg>
<svg class="b" style="left:1890.40px;top:999.50px" width="17" height="17" viewBox="0 0 17 17"><path d="M16.54 6.87L16.54 10.13L14.11 10.81L14.10 10.84L15.33 13.03L13.03 15.33L10.84 14.10L10.81 14.11L10.13 16.54L6.87 16.54L6.19 14.11L6.16 14.10L3.97 15.33L1.67 13.03L2.90 10.84L2.89 10.81L0.46 10.13L0.46 6.87L2.89 6.19L2.90 6.16L1.67 3.97L3.97 1.67L6.16 2.90L6.19 2.89L6.87 0.46L10.13 0.46L10.81 2.89L10.84 2.90L13.03 1.67L15.33 3.97L14.10 6.16L14.11 6.19Z" fill="#8a8a8a"/><circle cx="8.5" cy="8.5" r="2.95" fill="#f2f2f2"/></svg>
<div class="b" style="left:0.00px;top:1032.00px;width:1920.00px;height:48.00px;background:#202020;"></div>
<svg class="b" style="left:596.50px;top:1044.20px" width="23.6" height="23.6" viewBox="0 0 24 24"><defs><linearGradient id="wg" x1="0" y1="0" x2="1" y2="1"><stop offset="0" stop-color="#6ad8ff"/><stop offset="1" stop-color="#1498e8"/></linearGradient></defs><path d="M0 0H11.3V11.3H0ZM12.7 0H24V11.3H12.7ZM0 12.7H11.3V24H0ZM12.7 12.7H24V24H12.7Z" fill="url(#wg)"/></svg>
<svg class="b" style="left:641.20px;top:1044.00px" width="24" height="24" viewBox="0 0 24 24"><circle cx="14" cy="9.5" r="7.3" fill="none" stroke="#f4f4f4" stroke-width="2.6"/><path d="M8.8 15L2 22.5" stroke="#f4f4f4" stroke-width="3.2" stroke-linecap="round"/></svg>
<svg class="b" style="left:684.60px;top:1045.00px" width="26" height="22" viewBox="0 0 26 22"><rect x="9" y="0.5" width="16" height="14" rx="1.5" fill="#f2f2f2"/><rect x="1" y="7" width="16" height="14" rx="1.5" fill="#6a6a6a" stroke="#8a8a8a" stroke-width="0.8"/></svg>
<svg class="b" style="left:729.10px;top:1045.00px" width="24" height="22" viewBox="0 0 24 22"><rect x="0.5" y="0.5" width="23" height="21" rx="2" fill="#1668c0"/><rect x="2.6" y="2.6" width="8.6" height="16.8" rx="1" fill="#fff"/><rect x="13" y="2.6" width="8.6" height="7.4" rx="1" fill="#5cc0ff"/><rect x="13" y="12" width="8.6" height="7.4" rx="1" fill="#2c92ea"/></svg>
<svg class="b" style="left:772.70px;top:1044.00px" width="24" height="24" viewBox="0 0 24 24"><path d="M12 1C18.2 1 23 5.6 23 11.4C23 17.2 18.2 21.6 12 21.6C10.4 21.6 9 21.4 7.6 20.8L2 23L3.6 18C1.9 16.2 1 13.9 1 11.4C1 5.6 5.8 1 12 1Z" fill="#7b6cd9"/><rect x="6" y="7.5" width="8.6" height="7.8" rx="1.6" fill="#fff"/><path d="M15 10.4L18.6 8V15L15 12.6Z" fill="#fff"/></svg>
<svg class="b" style="left:815.60px;top:1045.00px" width="26" height="22" viewBox="0 0 26 22"><path d="M1 2.5C1 1.7 1.7 1 2.5 1H9L11.5 3.6H23.5C24.3 3.6 25 4.3 25 5.1V8H1Z" fill="#e8a820"/><rect x="1" y="5.6" width="24" height="15.6" rx="1.5" fill="#ffd45c"/><rect x="7" y="14.6" width="12" height="6.6" rx="1" fill="#2c8be0"/></svg>
<svg class="b" style="left:861.00px;top:1044.00px" width="24" height="24" viewBox="0 0 24 24"><path d="M12 0.8C18.2 0.8 23.2 5.8 23.2 12C23.2 18.2 18.2 23.2 12 23.2C10 23.2 8.2 22.7 6.6 21.8L0.8 23.4L2.4 17.8C1.4 16.1 0.8 14.1 0.8 12C0.8 5.8 5.8 0.8 12 0.8Z" fill="#fff"/><circle cx="12" cy="12" r="9.3" fill="#2fc550"/><path d="M8.6 6.6C8 6.6 7 7.6 7 9C7 12.6 11.4 17 15 17C16.4 17 17.4 16 17.4 15.4L15 14L14 15.2C12 14.6 9.6 12.2 8.9 10L10 9Z" fill="#fff"/></svg>
<svg class="b" style="left:874.00px;top:1040.50px" width="14" height="14" viewBox="0 0 14 14"><circle cx="7" cy="7" r="7" fill="#e81123"/></svg>
<span class="t" style="left:878.60px;top:1040.23px;font-size:11px;line-height:15px;color:#fff;transform:scaleX(0.7520);">1</span>
<svg class="b" style="left:904.50px;top:1044.00px" width="24" height="24" viewBox="0 0 24 24"><defs><linearGradient id="eg" x1="0" y1="0" x2="1" y2="1"><stop offset="0" stop-color="#35c1f1"/><stop offset="0.5" stop-color="#1b84d6"/><stop offset="1" stop-color="#0c5aa8"/></linearGradient><linearGradient id="eg2" x1="0" y1="0" x2="1" y2="0"><stop offset="0" stop-color="#2cc36b"/><stop offset="1" stop-color="#58e08a"/></linearGradient></defs><circle cx="12" cy="12" r="11.3" fill="url(#eg)"/><path d="M12 0.7C18.5 0.7 23.3 5.5 23.3 10.5C23.3 14 20.6 15.8 18 15.8C15.6 15.8 14.4 14.6 15.2 13.4C16 12.2 15.6 8 11.4 8C6.5 8 2 11.5 1 15C-0.6 8 4.5 0.7 12 0.7Z" fill="url(#eg2)"/><path d="M8 14.5C8 18.5 11.5 21.8 16 21.5C13.5 23.6 9 23.8 6 21.5C3.6 19.6 3 16.6 4 14C5 11.8 8 11.5 8 14.5Z" fill="#0a4a92"/></svg>
<svg class="b" style="left:948.00px;top:1046.00px" width="24" height="20" viewBox="0 0 24 20"><rect x="0.5" y="0.5" width="23" height="19" fill="#0c0c0c" stroke="#9a9a9a" stroke-width="1"/><rect x="0.5" y="0.5" width="23" height="2.6" fill="#c8c8c8"/><path d="M3 7.5H6M7.5 6.5V8.5M9 6.8L11 8.2M4 10.5H13" stroke="#ddd" stroke-width="1"/></svg>
<svg class="b" style="left:992.40px;top:1044.00px" width="24" height="24" viewBox="0 0 24 24"><rect x="0.5" y="0.5" width="23" height="23" rx="2.5" fill="#f3782a"/><path d="M5.5 6.5C5.5 4.8 8 4.6 9 6L12 9L15 6C16 4.6 18.5 4.8 18.5 6.5V8C18.5 9 17 10.5 15.5 12C17 13.5 18.5 15 18.5 16V17.5C18.5 19.2 16 19.4 15 18L12 15L9 18C8 19.4 5.5 19.2 5.5 17.5V16C5.5 15 7 13.5 8.5 12C7 10.5 5.5 9 5.5 8Z" fill="#fff"/><circle cx="12" cy="12" r="1.6" fill="#f3782a"/></svg>
<svg class="b" style="left:1036.70px;top:1044.00px" width="24" height="24" viewBox="0 0 24 24"><circle cx="12" cy="12" r="11.4" fill="#e33b2e"/><path d="M12 12L2.2 6.2A11.4 11.4 0 0 0 9 23L12 12Z" fill="#2ba24c"/><path d="M12 12L9 23A11.4 11.4 0 0 0 21.9 6.3H12Z" fill="#fcc934"/><path d="M2.2 6.2A11.4 11.4 0 0 1 21.9 6.3H12Z" fill="#e33b2e"/><circle cx="12" cy="12" r="5.4" fill="#fff"/><circle cx="12" cy="12" r="4.2" fill="#3b7de8"/></svg>
<svg class="b" style="left:1080.70px;top:1044.00px" width="24" height="24" viewBox="0 0 24 24"><circle cx="12" cy="12" r="11.5" fill="#5fb57d"/><g fill="none" stroke="#fff" stroke-width="1.1"><ellipse cx="12" cy="12" rx="9" ry="3.6"/><ellipse cx="12" cy="12" rx="9" ry="3.6" transform="rotate(60 12 12)"/><ellipse cx="12" cy="12" rx="9" ry="3.6" transform="rotate(120 12 12)"/></g><circle cx="12" cy="12" r="1.6" fill="#fff"/></svg>
<svg class="b" style="left:1125.00px;top:1043.50px" width="24" height="25" viewBox="0 0 24 25"><path d="M12 0.5L23.5 6V19L12 24.5L0.5 19V6Z" fill="#2468c8"/><path d="M12 0.5L23.5 6L12 11.5L0.5 6Z" fill="#4a90e8"/><path d="M12 11.5L23.5 6V19L12 24.5Z" fill="#1a4ea0"/><path d="M12 7L18 10V17L12 20L6 17V10Z" fill="#f2a030"/><path d="M12 7L18 10L12 13L6 10Z" fill="#ffc060"/><path d="M12 13L18 10V17L12 20Z" fill="#d07a18"/></svg>
<svg class="b" style="left:1169.00px;top:1044.00px" width="24" height="24" viewBox="0 0 24 24"><circle cx="12" cy="12" r="11.6" fill="#fff"/><g stroke-width="3" stroke-linecap="round" fill="none"><path d="M9.6 5.5V11" stroke="#36c5f0"/><path d="M5.6 9.8H6" stroke="#36c5f0"/><path d="M13 9.6H18.5" stroke="#2eb67d"/><path d="M14.3 5.6V6" stroke="#2eb67d"/><path d="M14.4 13V18.5" stroke="#ecb22e"/><path d="M18 14.3H18.4" stroke="#ecb22e"/><path d="M5.5 14.4H11" stroke="#e01e5a"/><path d="M9.7 18V18.4" stroke="#e01e5a"/></g></svg>
<svg class="b" style="left:1211.50px;top:1044.00px" width="26" height="24" viewBox="0 0 26 24"><path d="M13 1.2L24.6 12.6C25.4 13.6 24.8 14.6 23.6 14.6H17.6L19.4 17L15.6 16.6L13 19L10.4 16.6L6.6 17L8.4 14.6H2.4C1.2 14.6 0.6 13.6 1.4 12.6Z" fill="#0c0c0c" stroke="#3c3c3c" stroke-width=".8"/><path d="M13 2.6L17.4 7L15.4 8.6L13.6 7L11.6 9L10 7.6L8.4 8Z" fill="#e8eef8"/><path d="M13 2.6L17.4 7L15.4 8.6Z" fill="#8ab4e8"/><ellipse cx="13" cy="21.4" rx="3.4" ry="1.5" fill="#0c0c0c" stroke="#3c3c3c" stroke-width=".6"/><ellipse cx="20.4" cy="17.8" rx="1.4" ry=".8" fill="#0c0c0c"/><ellipse cx="5.6" cy="18.8" rx="1.6" ry=".8" fill="#0c0c0c"/></svg>
<div class="b" style="left:1249.00px;top:1036.20px;width:39.60px;height:39.60px;background:#2e2e2e;border-radius:4px;border:1px solid #383838;box-sizing:border-box;"></div>
<svg class="b" style="left:1256.80px;top:1044.00px" width="24" height="24" viewBox="0 0 24 24"><defs><linearGradient id="fg" x1="0" y1="0" x2="1" y2="1"><stop offset="0" stop-color="#fde6cc"/><stop offset="1" stop-color="#f4b070"/></linearGradient></defs><rect x="0" y="0" width="24" height="24" fill="url(#fg)"/><path d="M7.5 4H17.5V7.6H11.8V10.6H16.5V14H11.8V19.5H7.5Z" fill="#e07a18"/><path d="M7.5 4H17.5V5.4H9.2V19.5H7.5Z" fill="#f8b060"/></svg>
<span class="t" style="left:1272.00px;top:1062.30px;font-size:4.5px;line-height:8.5px;color:#c85a10;transform:scaleX(0.9326);">360</span>
<div class="b" style="left:1261.00px;top:1072.50px;width:15.80px;height:2.80px;background:#4cc2ff;border-radius:1.5px;"></div>
<svg class="b" style="left:1300.40px;top:1044.00px" width="24" height="24" viewBox="0 0 24 24"><path d="M23.27 9.72L23.27 14.28L19.87 15.24L19.85 15.28L21.59 18.35L18.35 21.59L15.28 19.85L15.24 19.87L14.28 23.27L9.72 23.27L8.76 19.87L8.72 19.85L5.65 21.59L2.41 18.35L4.15 15.28L4.13 15.24L0.73 14.28L0.73 9.72L4.13 8.76L4.15 8.72L2.41 5.65L5.65 2.41L8.72 4.15L8.76 4.13L9.72 0.73L14.28 0.73L15.24 4.13L15.28 4.15L18.35 2.41L21.59 5.65L19.85 8.72L19.87 8.76Z" fill="#9aa0a8"/><circle cx="12" cy="12" r="4.14" fill="#202020"/><circle cx="12" cy="12" r="5" fill="#3a8ee6"/><circle cx="12" cy="12" r="2.4" fill="#202020"/></svg>
<div class="b" style="left:825.60px;top:1072.60px;width:6.00px;height:2.60px;background:#8a8a8a;border-radius:1.3px;"></div>
<div class="b" style="left:870.00px;top:1072.60px;width:6.00px;height:2.60px;background:#8a8a8a;border-radius:1.3px;"></div>
<div class="b" style="left:1045.70px;top:1072.60px;width:6.00px;height:2.60px;background:#8a8a8a;border-radius:1.3px;"></div>
<div class="b" style="left:1309.40px;top:1072.60px;width:6.00px;height:2.60px;background:#8a8a8a;border-radius:1.3px;"></div>
<svg class="b" style="left:1667.50px;top:1051.00px" width="13" height="8" viewBox="0 0 13 8"><path d="M1 7L6.5 1.5L12 7" fill="none" stroke="#f2f2f2" stroke-width="1.3"/></svg>
<svg class="b" style="left:1697.00px;top:1047.00px" width="18" height="18" viewBox="0 0 18 18"><path d="M2.5 8C2.5 4.5 5.4 2 8.8 2C11 2 13 3.2 14 5M14.6 1.5V5.3H10.8" fill="none" stroke="#f2f2f2" stroke-width="1.2"/><path d="M3 12.5C3.6 14 4.6 15 6 15.6M2.4 16V12.2H6.2" fill="none" stroke="#f2f2f2" stroke-width="1.2"/><circle cx="13" cy="13.3" r="4" fill="#f7941d"/></svg>
<span class="t" style="left:1733.50px;top:1041.18px;font-size:11.5px;line-height:15.5px;color:#f2f2f2;transform:scaleX(0.8828);">ENG</span>
<span class="t" style="left:1737.00px;top:1057.18px;font-size:11.5px;line-height:15.5px;color:#f2f2f2;transform:scaleX(0.9077);">US</span>
<svg class="b" style="left:1773.00px;top:1048.50px" width="17" height="13" viewBox="0 0 17 13"><path d="M1 4.6C5 0.6 12 0.6 16 4.6M3.6 7.4C6.4 4.6 10.6 4.6 13.4 7.4M6 10C7.4 8.6 9.6 8.6 11 10" fill="none" stroke="#f2f2f2" stroke-width="1.3" stroke-linecap="round"/><circle cx="8.5" cy="11.8" r="1.2" fill="#f2f2f2"/></svg>
<svg class="b" style="left:1798.00px;top:1049.50px" width="17" height="13" viewBox="0 0 17 13"><path d="M1 4.3H3.6L7.4 1V12L3.6 8.7H1Z" fill="none" stroke="#f2f2f2" stroke-width="1.1" stroke-linejoin="round"/><path d="M9.6 4.4C10.6 5.6 10.6 7.4 9.6 8.6M11.6 2.6C13.6 4.8 13.6 8.2 11.6 10.4" fill="none" stroke="#f2f2f2" stroke-width="1.1" stroke-linecap="round"/><path d="M13.8 1C16.6 4 16.6 9 13.8 12" fill="none" stroke="#777" stroke-width="1.1" stroke-linecap="round"/></svg>
<svg class="b" style="left:1821.50px;top:1050.00px" width="18" height="12" viewBox="0 0 18 12"><rect x="5" y="1.6" width="10.6" height="8.6" rx="1.6" fill="none" stroke="#f2f2f2" stroke-width="1.2"/><rect x="6.8" y="3.4" width="7" height="5" rx="0.6" fill="#f2f2f2"/><path d="M16 4.4V7.6" stroke="#f2f2f2" stroke-width="1.4"/><path d="M1.4 1.4V3.2M3.8 1.4V3.2M0.6 3.4H4.6V5.6C4.6 6.6 3.8 7.2 2.6 7.2C1.4 7.2 0.6 6.6 0.6 5.6ZM2.6 7.2V9.4H5" fill="none" stroke="#f2f2f2" stroke-width="1"/></svg>
<span class="t" style="left:1861.80px;top:1040.68px;font-size:11.5px;line-height:15.5px;color:#f2f2f2;transform:scaleX(0.9946);">8:38 PM</span>
<span class="t" style="left:1853.60px;top:1056.38px;font-size:11.5px;line-height:15.5px;color:#f2f2f2;transform:scaleX(1.0097);">2/11/2022</span>
</body></html>
